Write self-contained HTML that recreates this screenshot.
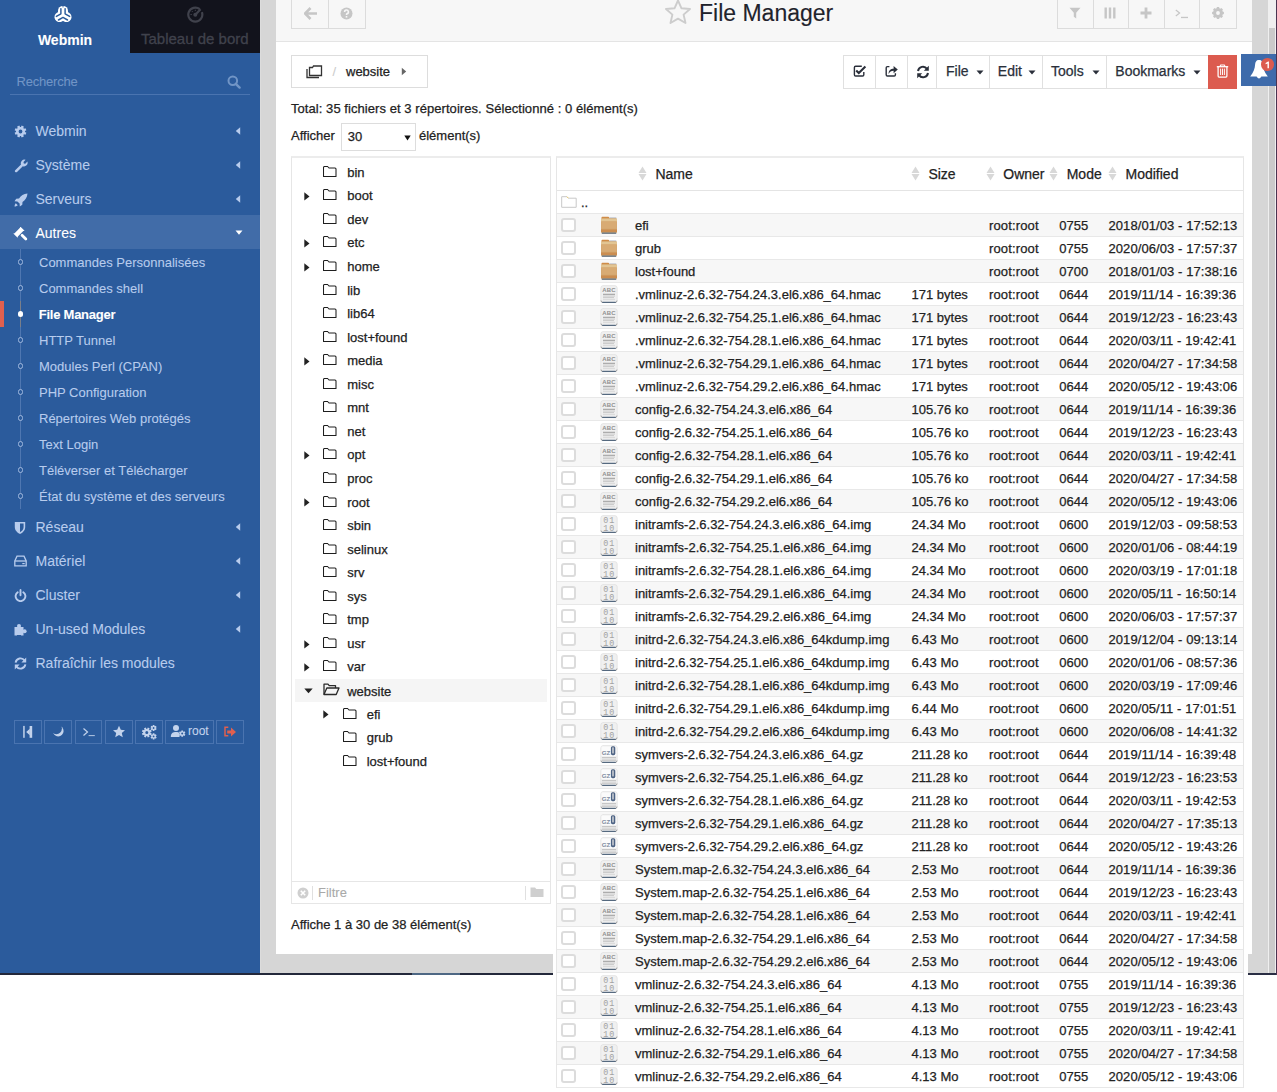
<!DOCTYPE html>
<html><head><meta charset="utf-8"><title>File Manager</title>
<style>
html,body{margin:0;padding:0;}
body{width:1277px;height:1092px;overflow:hidden;position:relative;background:#fff;font-family:"Liberation Sans", sans-serif;}
.r{position:absolute;}
.t{position:absolute;white-space:nowrap;}
</style></head><body>
<div class="r" style="left:0px;top:0px;width:1277px;height:973px;background:#d6d6d6"></div>
<div class="r" style="left:0px;top:0px;width:260px;height:973px;background:#2b5b9c"></div>
<div class="r" style="left:260px;top:0px;width:1px;height:973px;background:#dcdcdc"></div>
<div class="r" style="left:130px;top:0px;width:130px;height:53px;background:#12131c"></div>
<svg class="r" style="left:50.5px;top:3.3px" width="24" height="24" viewBox="-12 -12 24 24"><g fill="#fff"><rect x="-5.0" y="-9.1" width="10.0" height="14.1" rx="5.0"/><rect x="-5.0" y="-9.1" width="10.0" height="14.1" rx="5.0" transform="rotate(120)"/><rect x="-5.0" y="-9.1" width="10.0" height="14.1" rx="5.0" transform="rotate(240)"/></g>
<g fill="none" stroke="#2b5b9c" stroke-width="1.45" stroke-linecap="round" stroke-linejoin="round"><path d="M-2.1 -6.4 V-1.21 L-6.64 1.42"/><path d="M2.1 -6.4 V-1.21 L6.64 1.42"/><path d="M-4.54 5.0 L0 2.42 L4.54 5.0"/></g>
<path d="M0 -9.6 V-7.6" stroke="#2b5b9c" stroke-width="0.9"/></svg>
<div class="t" style="left:37.9px;top:31.55px;font-size:14px;line-height:16.8px;color:#ffffff;font-weight:700;-webkit-text-stroke:0.08px #ffffff;">Webmin</div>
<svg class="r" style="left:187px;top:6px" width="17" height="17" viewBox="0 0 17 17"><g fill="none" stroke="#40424c" stroke-width="2.2"><path d="M12.8 3.2 A7 7 0 1 0 14.9 6.2"/><path d="M8.3 8.8 L13.6 3.2"/></g><circle cx="8.3" cy="8.8" r="2" fill="#40424c"/><path d="M3.5 8.5 H4.8 M8.3 3.7 V5 M4.8 5 L5.7 5.9" stroke="#40424c" stroke-width="1"/></svg>
<div class="t" style="left:141px;top:30.00px;font-size:15px;line-height:18.0px;color:#40424c;font-weight:400;-webkit-text-stroke:0.08px #40424c;-webkit-text-stroke:0.3px #40424c">Tableau de bord</div>
<div class="t" style="left:16.5px;top:73.70px;font-size:13px;line-height:15.6px;color:#7195c6;font-weight:400;-webkit-text-stroke:0.08px #7195c6;letter-spacing:-0.2px">Recherche</div>
<svg class="r" style="left:227px;top:75px" width="14" height="14" viewBox="0 0 14 14"><circle cx="5.8" cy="5.8" r="4.3" fill="none" stroke="#7195c6" stroke-width="2"/><path d="M8.8 8.8 L12.6 12.6" stroke="#7195c6" stroke-width="2.4" stroke-linecap="round"/></svg>
<div class="r" style="left:10px;top:94px;width:240px;height:1px;background:#4a74b0"></div>
<svg class="r" style="left:14px;top:124.5px" width="13" height="13" viewBox="0 0 13 13"><path fill="#b8cced" fill-rule="evenodd" d="M10.98 6.92 L12.38 7.67 L11.49 9.83 L9.97 9.37 L9.37 9.97 L9.83 11.49 L7.67 12.38 L6.92 10.98 L6.08 10.98 L5.33 12.38 L3.17 11.49 L3.63 9.97 L3.03 9.37 L1.51 9.83 L0.62 7.67 L2.02 6.92 L2.02 6.08 L0.62 5.33 L1.51 3.17 L3.03 3.63 L3.63 3.03 L3.17 1.51 L5.33 0.62 L6.08 2.02 L6.92 2.02 L7.67 0.62 L9.83 1.51 L9.37 3.03 L9.97 3.63 L11.49 3.17 L12.38 5.33 L10.98 6.08z M8.40 6.50 A1.9 1.9 0 1 0 4.60 6.50 A1.9 1.9 0 1 0 8.40 6.50z"/></svg>
<div class="t" style="left:35.5px;top:122.75px;font-size:14px;line-height:16.8px;color:#b8cced;font-weight:400;-webkit-text-stroke:0.08px #b8cced;">Webmin</div>
<svg class="r" style="left:235px;top:127px" width="6" height="8" viewBox="0 0 6 8"><path d="M5.2 0.3v7.4L0.8 4z" fill="#b8cced"/></svg>
<svg class="r" style="left:14px;top:158.5px" width="14" height="14" viewBox="0 0 14 14"><path fill="#b8cced" d="M1.2 11.2 L7 5.4 a3.6 3.6 0 0 1 4.6-4.6 L9.5 2.9 l0.3 1.5 1.5 0.3 2.1-2.1 a3.6 3.6 0 0 1 -4.6 4.6 L3 12.9 a1.2 1.2 0 0 1-1.8-1.7z"/></svg>
<div class="t" style="left:35.5px;top:156.75px;font-size:14px;line-height:16.8px;color:#b8cced;font-weight:400;-webkit-text-stroke:0.08px #b8cced;">Système</div>
<svg class="r" style="left:235px;top:161px" width="6" height="8" viewBox="0 0 6 8"><path d="M5.2 0.3v7.4L0.8 4z" fill="#b8cced"/></svg>
<svg class="r" style="left:14px;top:192.5px" width="14" height="14" viewBox="0 0 14 14"><path fill="#b8cced" d="M13.5 0.5 C9.5 0.8 7 2.8 5 5.5 L2.2 5.7 0.5 8.2 3.4 8.4 5.6 10.6 5.8 13.5 8.3 11.8 8.5 9 C11.2 7 13.2 4.5 13.5 0.5z M1.8 10.2 C0.9 11 0.6 12.6 0.5 13.5 C1.4 13.4 3 13.1 3.8 12.2z"/></svg>
<div class="t" style="left:35.5px;top:190.75px;font-size:14px;line-height:16.8px;color:#b8cced;font-weight:400;-webkit-text-stroke:0.08px #b8cced;">Serveurs</div>
<svg class="r" style="left:235px;top:195px" width="6" height="8" viewBox="0 0 6 8"><path d="M5.2 0.3v7.4L0.8 4z" fill="#b8cced"/></svg>
<div class="r" style="left:0px;top:215px;width:260px;height:34px;background:#416ca8"></div>
<svg class="r" style="left:13px;top:226.5px" width="16" height="16" viewBox="0 0 16 16"><g fill="#ffffff" transform="translate(6.0 5.2) rotate(-45)"><path d="M-4.9 -3.2 L-3.8 -2.4 H3.8 L4.9 -3.2 V3.0 L3.8 2.2 H-3.8 L-4.9 3.0z"/><rect x="-1.4" y="3.0" width="2.8" height="8.0" rx="1.3"/></g></svg>
<div class="t" style="left:35.5px;top:224.75px;font-size:14px;line-height:16.8px;color:#ffffff;font-weight:400;-webkit-text-stroke:0.08px #ffffff;">Autres</div>
<svg class="r" style="left:235px;top:230px" width="8" height="5" viewBox="0 0 8 5"><path d="M0.5 0.5h7L4 4.8z" fill="#fff"/></svg>
<div class="r" style="left:20px;top:249px;width:1px;height:260px;background:#4f77b1"></div>
<div class="r" style="left:17.7px;top:259.4px;width:3.6px;height:3.6px;border-radius:50%;border:1px solid #9fb8de;background:#2b5b9c"></div>
<div class="t" style="left:39px;top:254.70px;font-size:13px;line-height:15.6px;color:#b8cced;font-weight:400;-webkit-text-stroke:0.08px #b8cced;">Commandes Personnalisées</div>
<div class="r" style="left:17.7px;top:285.4px;width:3.6px;height:3.6px;border-radius:50%;border:1px solid #9fb8de;background:#2b5b9c"></div>
<div class="t" style="left:39px;top:280.70px;font-size:13px;line-height:15.6px;color:#b8cced;font-weight:400;-webkit-text-stroke:0.08px #b8cced;">Commandes shell</div>
<div class="r" style="left:0px;top:301px;width:4px;height:26px;background:#e0604f"></div>
<div class="r" style="left:20px;top:301px;width:1px;height:26px;background:#7a7f8a"></div>
<div class="r" style="left:17.6px;top:311.2px;width:5.6px;height:5.6px;border-radius:50%;background:#fff"></div>
<div class="t" style="left:38.8px;top:306.70px;font-size:13px;line-height:15.6px;color:#ffffff;font-weight:700;-webkit-text-stroke:0.08px #ffffff;letter-spacing:-0.25px">File Manager</div>
<div class="r" style="left:17.7px;top:337.4px;width:3.6px;height:3.6px;border-radius:50%;border:1px solid #9fb8de;background:#2b5b9c"></div>
<div class="t" style="left:39px;top:332.70px;font-size:13px;line-height:15.6px;color:#b8cced;font-weight:400;-webkit-text-stroke:0.08px #b8cced;">HTTP Tunnel</div>
<div class="r" style="left:17.7px;top:363.4px;width:3.6px;height:3.6px;border-radius:50%;border:1px solid #9fb8de;background:#2b5b9c"></div>
<div class="t" style="left:39px;top:358.70px;font-size:13px;line-height:15.6px;color:#b8cced;font-weight:400;-webkit-text-stroke:0.08px #b8cced;">Modules Perl (CPAN)</div>
<div class="r" style="left:17.7px;top:389.4px;width:3.6px;height:3.6px;border-radius:50%;border:1px solid #9fb8de;background:#2b5b9c"></div>
<div class="t" style="left:39px;top:384.70px;font-size:13px;line-height:15.6px;color:#b8cced;font-weight:400;-webkit-text-stroke:0.08px #b8cced;">PHP Configuration</div>
<div class="r" style="left:17.7px;top:415.4px;width:3.6px;height:3.6px;border-radius:50%;border:1px solid #9fb8de;background:#2b5b9c"></div>
<div class="t" style="left:39px;top:410.70px;font-size:13px;line-height:15.6px;color:#b8cced;font-weight:400;-webkit-text-stroke:0.08px #b8cced;">Répertoires Web protégés</div>
<div class="r" style="left:17.7px;top:441.4px;width:3.6px;height:3.6px;border-radius:50%;border:1px solid #9fb8de;background:#2b5b9c"></div>
<div class="t" style="left:39px;top:436.70px;font-size:13px;line-height:15.6px;color:#b8cced;font-weight:400;-webkit-text-stroke:0.08px #b8cced;">Text Login</div>
<div class="r" style="left:17.7px;top:467.4px;width:3.6px;height:3.6px;border-radius:50%;border:1px solid #9fb8de;background:#2b5b9c"></div>
<div class="t" style="left:39px;top:462.70px;font-size:13px;line-height:15.6px;color:#b8cced;font-weight:400;-webkit-text-stroke:0.08px #b8cced;">Téléverser et Télécharger</div>
<div class="r" style="left:17.7px;top:493.4px;width:3.6px;height:3.6px;border-radius:50%;border:1px solid #9fb8de;background:#2b5b9c"></div>
<div class="t" style="left:39px;top:488.70px;font-size:13px;line-height:15.6px;color:#b8cced;font-weight:400;-webkit-text-stroke:0.08px #b8cced;">État du système et des serveurs</div>
<svg class="r" style="left:14px;top:520.5px" width="12" height="14" viewBox="0 0 12 14"><path fill="#b8cced" d="M0.8 1 H11.2 V6 C11.2 9.5 8.5 11.8 6 13 C3.5 11.8 0.8 9.5 0.8 6z"/><path fill="#2b5b9c" d="M6 2.6 H9.6 V6 C9.6 8.6 7.8 10.3 6 11.2z"/></svg>
<div class="t" style="left:35.5px;top:518.75px;font-size:14px;line-height:16.8px;color:#b8cced;font-weight:400;-webkit-text-stroke:0.08px #b8cced;">Réseau</div>
<svg class="r" style="left:235px;top:523px" width="6" height="8" viewBox="0 0 6 8"><path d="M5.2 0.3v7.4L0.8 4z" fill="#b8cced"/></svg>
<svg class="r" style="left:14px;top:554.5px" width="13" height="12" viewBox="0 0 13 12"><g fill="none" stroke="#b8cced" stroke-width="1.3"><path d="M0.8 6 L3 1.2 H10 L12.2 6 V10.8 H0.8z"/><path d="M0.8 6 H12.2"/></g><rect x="8.3" y="8" width="2.4" height="1.2" fill="#b8cced"/></svg>
<div class="t" style="left:35.5px;top:552.75px;font-size:14px;line-height:16.8px;color:#b8cced;font-weight:400;-webkit-text-stroke:0.08px #b8cced;">Matériel</div>
<svg class="r" style="left:235px;top:557px" width="6" height="8" viewBox="0 0 6 8"><path d="M5.2 0.3v7.4L0.8 4z" fill="#b8cced"/></svg>
<svg class="r" style="left:14px;top:588.5px" width="13" height="13" viewBox="0 0 13 13"><g fill="none" stroke="#b8cced" stroke-width="1.9" stroke-linecap="round"><path d="M3.7 3.2 A4.9 4.9 0 1 0 9.3 3.2"/><path d="M6.5 1 V6.3"/></g></svg>
<div class="t" style="left:35.5px;top:586.75px;font-size:14px;line-height:16.8px;color:#b8cced;font-weight:400;-webkit-text-stroke:0.08px #b8cced;">Cluster</div>
<svg class="r" style="left:235px;top:591px" width="6" height="8" viewBox="0 0 6 8"><path d="M5.2 0.3v7.4L0.8 4z" fill="#b8cced"/></svg>
<svg class="r" style="left:14px;top:622.5px" width="14" height="13" viewBox="0 0 14 13"><g fill="#b8cced"><rect x="0.5" y="4" width="9" height="8.5"/><circle cx="5" cy="3" r="2"/><circle cx="10.6" cy="8.2" r="2"/></g><rect x="3" y="12" width="4" height="1" fill="#2b5b9c"/></svg>
<div class="t" style="left:35.5px;top:620.75px;font-size:14px;line-height:16.8px;color:#b8cced;font-weight:400;-webkit-text-stroke:0.08px #b8cced;">Un-used Modules</div>
<svg class="r" style="left:235px;top:625px" width="6" height="8" viewBox="0 0 6 8"><path d="M5.2 0.3v7.4L0.8 4z" fill="#b8cced"/></svg>
<svg class="r" style="left:14px;top:656.5px" width="13" height="13" viewBox="0 0 13 13"><g fill="none" stroke="#b8cced" stroke-width="1.9"><path d="M1.6 5.6 A5 5 0 0 1 10.6 3.5"/><path d="M11.4 7.4 A5 5 0 0 1 2.4 9.5"/></g><path fill="#b8cced" d="M12.2 0.6 V5.4 H7.4z M0.8 12.4 V7.6 H5.6z"/></svg>
<div class="t" style="left:35.5px;top:654.75px;font-size:14px;line-height:16.8px;color:#b8cced;font-weight:400;-webkit-text-stroke:0.08px #b8cced;">Rafraîchir les modules</div>
<div class="r" style="left:14px;top:720px;width:25.5px;height:22px;border:1px solid #4a74b0"></div>
<div class="r" style="left:44.4px;top:720px;width:26px;height:22px;border:1px solid #4a74b0"></div>
<div class="r" style="left:75.2px;top:720px;width:25.3px;height:22px;border:1px solid #4a74b0"></div>
<div class="r" style="left:105.3px;top:720px;width:25.3px;height:22px;border:1px solid #4a74b0"></div>
<div class="r" style="left:135.4px;top:720px;width:25.2px;height:22px;border:1px solid #4a74b0"></div>
<div class="r" style="left:165.3px;top:720px;width:46.5px;height:22px;border:1px solid #4a74b0"></div>
<div class="r" style="left:216.4px;top:720px;width:25.2px;height:22px;border:1px solid #4a74b0"></div>
<svg class="r" style="left:20px;top:724px" width="16" height="16" viewBox="0 0 16 16"><rect x="3.2" y="1.9" width="1.5" height="11.9" fill="#c3d3ec"/><path d="M6.2 8 L9.8 4.7 V11.3z" fill="#c3d3ec"/><rect x="9.6" y="2" width="2.6" height="11.8" fill="#c3d3ec"/></svg>
<svg class="r" style="left:50px;top:723.2px" width="16" height="16" viewBox="0 0 16 16"><defs><mask id="moonm"><rect width="16" height="16" fill="#fff"/><circle cx="6.3" cy="5.6" r="5.6" fill="#000"/></mask></defs><circle cx="8.2" cy="8" r="5.4" fill="#c3d3ec" mask="url(#moonm)"/></svg>
<svg class="r" style="left:81px;top:724px" width="16" height="16" viewBox="0 0 16 16"><path d="M2.5 4.5 L6.5 8 L2.5 11.5" fill="none" stroke="#c3d3ec" stroke-width="1.2"/><rect x="7.6" y="11.2" width="6.2" height="0.9" fill="#c3d3ec"/></svg>
<svg class="r" style="left:111px;top:724px" width="16" height="16" viewBox="0 0 16 16"><path d="M8 1.8 L9.8 5.8 L14 6.2 L10.8 9 L11.8 13.3 L8 11 L4.2 13.3 L5.2 9 L2 6.2 L6.2 5.8z" fill="#c3d3ec"/></svg>
<svg class="r" style="left:141px;top:724px" width="17" height="16" viewBox="0 0 17 16"><path fill="#c3d3ec" fill-rule="evenodd" d="M9.38 8.84 L10.70 9.48 L9.96 11.28 L8.57 10.79 L8.09 11.27 L8.58 12.66 L6.78 13.40 L6.14 12.08 L5.46 12.08 L4.82 13.40 L3.02 12.66 L3.51 11.27 L3.03 10.79 L1.64 11.28 L0.90 9.48 L2.22 8.84 L2.22 8.16 L0.90 7.52 L1.64 5.72 L3.03 6.21 L3.51 5.73 L3.02 4.34 L4.82 3.60 L5.46 4.92 L6.14 4.92 L6.78 3.60 L8.58 4.34 L8.09 5.73 L8.57 6.21 L9.96 5.72 L10.70 7.52 L9.38 8.16z M7.30 8.50 A1.5 1.5 0 1 0 4.30 8.50 A1.5 1.5 0 1 0 7.30 8.50z M14.88 4.29 L15.69 4.83 L14.86 6.26 L13.99 5.83 L13.49 6.12 L13.43 7.09 L11.77 7.09 L11.71 6.12 L11.21 5.83 L10.34 6.26 L9.51 4.83 L10.32 4.29 L10.32 3.71 L9.51 3.17 L10.34 1.74 L11.21 2.17 L11.71 1.88 L11.77 0.91 L13.43 0.91 L13.49 1.88 L13.99 2.17 L14.86 1.74 L15.69 3.17 L14.88 3.71z M13.50 4.00 A0.9 0.9 0 1 0 11.70 4.00 A0.9 0.9 0 1 0 13.50 4.00z M14.88 12.69 L15.69 13.23 L14.86 14.66 L13.99 14.23 L13.49 14.52 L13.43 15.49 L11.77 15.49 L11.71 14.52 L11.21 14.23 L10.34 14.66 L9.51 13.23 L10.32 12.69 L10.32 12.11 L9.51 11.57 L10.34 10.14 L11.21 10.57 L11.71 10.28 L11.77 9.31 L13.43 9.31 L13.49 10.28 L13.99 10.57 L14.86 10.14 L15.69 11.57 L14.88 12.11z M13.50 12.40 A0.9 0.9 0 1 0 11.70 12.40 A0.9 0.9 0 1 0 13.50 12.40z"/></svg>
<svg class="r" style="left:170px;top:723.2px" width="18" height="16" viewBox="0 0 18 16"><circle cx="6" cy="5" r="3" fill="#c3d3ec"/><path d="M0.8 14 C0.8 10 3 9 6 9 C8 9 9 9.5 9.5 10 V14z" fill="#c3d3ec"/><path fill="#c3d3ec" fill-rule="evenodd" d="M14.58 10.90 L15.39 11.45 L14.53 12.93 L13.65 12.51 L13.13 12.81 L13.05 13.79 L11.35 13.79 L11.27 12.81 L10.75 12.51 L9.87 12.93 L9.01 11.45 L9.82 10.90 L9.82 10.30 L9.01 9.75 L9.87 8.27 L10.75 8.69 L11.27 8.39 L11.35 7.41 L13.05 7.41 L13.13 8.39 L13.65 8.69 L14.53 8.27 L15.39 9.75 L14.58 10.30z M13.20 10.60 A1.0 1.0 0 1 0 11.20 10.60 A1.0 1.0 0 1 0 13.20 10.60z"/></svg>
<div class="t" style="left:188px;top:724.14px;font-size:12px;line-height:14.4px;color:#c3d3ec;font-weight:400;-webkit-text-stroke:0.08px #c3d3ec;">root</div>
<svg class="r" style="left:222px;top:724px" width="16" height="16" viewBox="0 0 16 16"><path d="M6.3 3.2 H3 V11.8 H6.3" fill="none" stroke="#e0604f" stroke-width="1.5"/><path d="M5.2 6.4 H9 V3.6 L14 8 L9 12.4 V9.6 H5.2z" fill="#e0604f"/></svg>
<div class="r" style="left:276px;top:0px;width:976px;height:954px;background:#ffffff"></div>
<div class="r" style="left:276px;top:0px;width:976px;height:41px;background:#f7f7f7;border-bottom:1px solid #e4e4e4"></div>
<div class="r" style="left:291px;top:-10px;width:75px;height:39px;border:1px solid #dcdcdc;box-sizing:border-box"></div>
<div class="r" style="left:328px;top:0px;width:1px;height:28px;background:#dcdcdc"></div>
<svg class="r" style="left:304px;top:7px" width="14" height="13" viewBox="0 0 14 13"><path d="M6.5 1 L1 6.5 L6.5 12 M1.5 6.5 H13" fill="none" stroke="#c6c6c6" stroke-width="2.6" stroke-linejoin="miter"/></svg>
<svg class="r" style="left:340px;top:7px" width="13" height="13" viewBox="0 0 13 13"><circle cx="6.5" cy="6.5" r="6" fill="#c6c6c6"/><path d="M4.6 4.9 A1.9 1.9 0 1 1 6.9 6.7 C6.5 6.9 6.5 7.2 6.5 7.9" fill="none" stroke="#f7f7f7" stroke-width="1.6"/><rect x="5.7" y="9" width="1.6" height="1.6" fill="#f7f7f7"/></svg>
<svg class="r" style="left:664px;top:-1px" width="28" height="26" viewBox="0 0 28 26"><path d="M14 1.5 L17.5 9.3 L26 10 L19.6 15.6 L21.5 24 L14 19.6 L6.5 24 L8.4 15.6 L2 10 L10.5 9.3z" fill="none" stroke="#cdcdcd" stroke-width="1.9" stroke-linejoin="round"/></svg>
<div class="t" style="left:699px;top:-0.47px;font-size:23px;line-height:27.6px;color:#1f232c;font-weight:400;-webkit-text-stroke:0.12px #1f232c;">File Manager</div>
<div class="r" style="left:1057px;top:-10px;width:180px;height:39px;border:1px solid #dcdcdc;box-sizing:border-box"></div>
<div class="r" style="left:1093px;top:0px;width:1px;height:28px;background:#dcdcdc"></div>
<div class="r" style="left:1128px;top:0px;width:1px;height:28px;background:#dcdcdc"></div>
<div class="r" style="left:1164px;top:0px;width:1px;height:28px;background:#dcdcdc"></div>
<div class="r" style="left:1199px;top:0px;width:1px;height:28px;background:#dcdcdc"></div>
<svg class="r" style="left:1069px;top:7px" width="12" height="12" viewBox="0 0 12 12"><path d="M0.5 0.8 H11.5 L7.2 5.8 V11.5 L4.8 9.8 V5.8z" fill="#c6c6c6"/></svg>
<svg class="r" style="left:1104px;top:7px" width="12" height="12" viewBox="0 0 12 12"><rect x="0.5" y="0.5" width="2.4" height="11" fill="#c6c6c6"/><rect x="4.8" y="0.5" width="2.4" height="11" fill="#c6c6c6"/><rect x="9.1" y="0.5" width="2.4" height="11" fill="#c6c6c6"/></svg>
<svg class="r" style="left:1140px;top:7px" width="12" height="12" viewBox="0 0 12 12"><path d="M4.6 0.5 H7.4 V4.6 H11.5 V7.4 H7.4 V11.5 H4.6 V7.4 H0.5 V4.6 H4.6z" fill="#c6c6c6"/></svg>
<svg class="r" style="left:1175px;top:7px" width="14" height="12" viewBox="0 0 14 12"><path d="M0.8 3 L4.6 6 L0.8 9" fill="none" stroke="#c6c6c6" stroke-width="1.2"/><rect x="6" y="9.8" width="7" height="1.3" fill="#c6c6c6"/></svg>
<svg class="r" style="left:1211px;top:6px" width="14" height="14" viewBox="0 0 14 14"><path fill="#c6c6c6" fill-rule="evenodd" d="M5.56 2.32 L5.95 1.09 L8.05 1.09 L8.44 2.32 L9.29 2.67 L10.43 2.08 L11.92 3.57 L11.33 4.71 L11.68 5.56 L12.91 5.95 L12.91 8.05 L11.68 8.44 L11.33 9.29 L11.92 10.43 L10.43 11.92 L9.29 11.33 L8.44 11.68 L8.05 12.91 L5.95 12.91 L5.56 11.68 L4.71 11.33 L3.57 11.92 L2.08 10.43 L2.67 9.29 L2.32 8.44 L1.09 8.05 L1.09 5.95 L2.32 5.56 L2.67 4.71 L2.08 3.57 L3.57 2.08 L4.71 2.67z M8.90 7.00 A1.9 1.9 0 1 0 5.10 7.00 A1.9 1.9 0 1 0 8.90 7.00z"/></svg>
<div class="r" style="left:291px;top:55px;width:137px;height:33px;border:1px solid #dddddd;box-sizing:border-box"></div>
<svg class="r" style="left:306px;top:64px" width="17" height="15" viewBox="0 0 17 15"><g fill="none" stroke="#333" stroke-width="1.3"><path d="M3.5 3.5 H6.5 L7.5 2 H15.5 V11.5 H3.5z"/><path d="M1 5 V13.5 H13"/></g></svg>
<div class="t" style="left:332.5px;top:63.70px;font-size:13px;line-height:15.6px;color:#cccccc;font-weight:400;-webkit-text-stroke:0.08px #cccccc;">/</div>
<div class="t" style="left:346px;top:64.10px;font-size:13px;line-height:15.6px;color:#222;font-weight:400;-webkit-text-stroke:0.25px #222;">website</div>
<svg class="r" style="left:401px;top:67px" width="6" height="9" viewBox="0 0 6 9"><path d="M0.8 0.8 V8.2 L5.2 4.5z" fill="#666"/></svg>
<div class="r" style="left:843px;top:55px;width:366px;height:34px;border:1px solid #e0e0e0;box-sizing:border-box"></div>
<div class="r" style="left:875px;top:55px;width:1px;height:34px;background:#e0e0e0"></div>
<div class="r" style="left:907px;top:55px;width:1px;height:34px;background:#e0e0e0"></div>
<div class="r" style="left:936px;top:55px;width:1px;height:34px;background:#e0e0e0"></div>
<div class="r" style="left:989px;top:55px;width:1px;height:34px;background:#e0e0e0"></div>
<div class="r" style="left:1042px;top:55px;width:1px;height:34px;background:#e0e0e0"></div>
<div class="r" style="left:1106px;top:55px;width:1px;height:34px;background:#e0e0e0"></div>
<svg class="r" style="left:852px;top:64.3px" width="15" height="14" viewBox="0 0 15 14"><path d="M9.8 2.2 H3.6 Q2.4 2.2 2.4 3.4 V10.8 Q2.4 12 3.6 12 H10.6 Q11.8 12 11.8 10.8 V8" fill="none" stroke="#2a2f3a" stroke-width="1.4"/><path d="M4.2 6.4 L6.8 9 L13.4 2.6" fill="none" stroke="#2a2f3a" stroke-width="2.1"/></svg>
<svg class="r" style="left:884.3px;top:63.8px" width="15" height="14" viewBox="0 0 15 14"><path d="M5.4 2.6 H3.4 Q2.2 2.6 2.2 3.8 V10.8 Q2.2 12 3.4 12 H10.2 Q11.4 12 11.4 10.8 V9.2" fill="none" stroke="#2a2f3a" stroke-width="1.4"/><path d="M4.6 10 C4.6 6.2 6.6 4.8 9.6 4.8 V2 L13.8 5.6 L9.6 9.2 V6.8 C7.2 6.8 5.8 7.8 4.6 10z" fill="#2a2f3a"/></svg>
<svg class="r" style="left:916px;top:64.5px" width="14" height="14" viewBox="0 0 14 14"><g fill="none" stroke="#2a2f3a" stroke-width="2"><path d="M2 6 A5 5 0 0 1 11 3.8"/><path d="M12 8 A5 5 0 0 1 3 10.2"/></g><path fill="#2a2f3a" d="M12.8 0.8 V5.8 H7.8z M1.2 13.2 V8.2 H6.2z"/></svg>
<div class="t" style="left:946px;top:62.75px;font-size:14px;line-height:16.8px;color:#2a2f3a;font-weight:400;-webkit-text-stroke:0.25px #2a2f3a;">File</div>
<svg class="r" style="left:975.5px;top:70px" width="8" height="5" viewBox="0 0 8 5"><path d="M0.5 0.5 H7.5 L4 4.5z" fill="#2a2f3a"/></svg>
<div class="t" style="left:997.8px;top:62.75px;font-size:14px;line-height:16.8px;color:#2a2f3a;font-weight:400;-webkit-text-stroke:0.25px #2a2f3a;">Edit</div>
<svg class="r" style="left:1027.5px;top:70px" width="8" height="5" viewBox="0 0 8 5"><path d="M0.5 0.5 H7.5 L4 4.5z" fill="#2a2f3a"/></svg>
<div class="t" style="left:1051px;top:62.75px;font-size:14px;line-height:16.8px;color:#2a2f3a;font-weight:400;-webkit-text-stroke:0.25px #2a2f3a;">Tools</div>
<svg class="r" style="left:1091.5px;top:70px" width="8" height="5" viewBox="0 0 8 5"><path d="M0.5 0.5 H7.5 L4 4.5z" fill="#2a2f3a"/></svg>
<div class="t" style="left:1115.3px;top:62.75px;font-size:14px;line-height:16.8px;color:#2a2f3a;font-weight:400;-webkit-text-stroke:0.25px #2a2f3a;">Bookmarks</div>
<svg class="r" style="left:1192.8px;top:70px" width="8" height="5" viewBox="0 0 8 5"><path d="M0.5 0.5 H7.5 L4 4.5z" fill="#2a2f3a"/></svg>
<div class="r" style="left:1208px;top:55px;width:29px;height:34px;background:#dc5b4f"></div>
<svg class="r" style="left:1216px;top:64.2px" width="13" height="14" viewBox="0 0 13 14"><g fill="none" stroke="#fff"><path d="M0.8 2.7 H12.2" stroke-width="1.3"/><path d="M4.3 2.7 V1.7 Q4.3 1 5 1 H8 Q8.7 1 8.7 1.7 V2.7" stroke-width="1.1"/><path d="M2.1 2.7 V12.1 Q2.1 13 3 13 H10 Q10.9 13 10.9 12.1 V2.7" stroke-width="1.25"/><path d="M4.6 4.6 V11 M6.5 4.6 V11 M8.4 4.6 V11" stroke-width="0.95"/></g></svg>
<div class="t" style="left:291px;top:100.90px;font-size:13px;line-height:15.6px;color:#222;font-weight:400;-webkit-text-stroke:0.25px #222;letter-spacing:0.06px">Total: 35 fichiers et 3 répertoires. Sélectionné : 0 élément(s)</div>
<div class="t" style="left:291px;top:127.90px;font-size:13px;line-height:15.6px;color:#222;font-weight:400;-webkit-text-stroke:0.25px #222;">Afficher</div>
<div class="r" style="left:341px;top:123px;width:75px;height:28px;border:1px solid #dddddd;box-sizing:border-box;background:#fff"></div>
<div class="t" style="left:347.7px;top:128.70px;font-size:13px;line-height:15.6px;color:#222;font-weight:400;-webkit-text-stroke:0.25px #222;">30</div>
<svg class="r" style="left:404px;top:135px" width="7" height="6" viewBox="0 0 7 6"><path d="M0.3 0.5 H6.7 L3.5 5.5z" fill="#111"/></svg>
<div class="t" style="left:419px;top:127.90px;font-size:13px;line-height:15.6px;color:#222;font-weight:400;-webkit-text-stroke:0.25px #222;">élément(s)</div>
<div class="r" style="left:291px;top:156px;width:260px;height:748px;border:1px solid #e6e6e6;border-top:2px solid #ececec;box-sizing:border-box;background:#fff"></div>
<div class="r" style="left:292px;top:881px;width:258px;height:1px;background:#e6e6e6"></div>
<svg class="r" style="left:297px;top:887px" width="12" height="12" viewBox="0 0 12 12"><circle cx="6" cy="6" r="5.5" fill="#cfcfcf"/><path d="M3.8 3.8 L8.2 8.2 M8.2 3.8 L3.8 8.2" stroke="#fff" stroke-width="1.6"/></svg>
<div class="r" style="left:312px;top:886px;width:1px;height:14px;background:#e0e0e0"></div>
<div class="t" style="left:318px;top:885.20px;font-size:13px;line-height:15.6px;color:#a9a9a9;font-weight:400;-webkit-text-stroke:0.08px #a9a9a9;">Filtre</div>
<div class="r" style="left:525px;top:886px;width:1px;height:14px;background:#e0e0e0"></div>
<svg class="r" style="left:530px;top:886px" width="14" height="12" viewBox="0 0 14 12"><path d="M0.5 1.5 H5 L6.3 3 H13.5 V11 H0.5z" fill="#cfcfcf"/></svg>
<svg class="r" style="left:323px;top:166px" width="14" height="12" viewBox="0 0 14 12"><path d="M0.5 10.5 V1.5 Q0.5 0.5 1.5 0.5 H4.6 L6 2 H12 Q13 2 13 3 V10.5z" fill="none" stroke="#1e1e1e" stroke-width="1.05" stroke-linejoin="round"/></svg>
<div class="t" style="left:347.2px;top:164.70px;font-size:13px;line-height:15.6px;color:#222;font-weight:400;-webkit-text-stroke:0.25px #222;">bin</div>
<svg class="r" style="left:303.8px;top:192.0px" width="6" height="9" viewBox="0 0 6 9"><path d="M0.3 0.3 V8.5 L5.5 4.4z" fill="#222"/></svg>
<svg class="r" style="left:323px;top:189px" width="14" height="12" viewBox="0 0 14 12"><path d="M0.5 10.5 V1.5 Q0.5 0.5 1.5 0.5 H4.6 L6 2 H12 Q13 2 13 3 V10.5z" fill="none" stroke="#1e1e1e" stroke-width="1.05" stroke-linejoin="round"/></svg>
<div class="t" style="left:347.2px;top:188.26px;font-size:13px;line-height:15.6px;color:#222;font-weight:400;-webkit-text-stroke:0.25px #222;">boot</div>
<svg class="r" style="left:323px;top:213px" width="14" height="12" viewBox="0 0 14 12"><path d="M0.5 10.5 V1.5 Q0.5 0.5 1.5 0.5 H4.6 L6 2 H12 Q13 2 13 3 V10.5z" fill="none" stroke="#1e1e1e" stroke-width="1.05" stroke-linejoin="round"/></svg>
<div class="t" style="left:347.2px;top:211.82px;font-size:13px;line-height:15.6px;color:#222;font-weight:400;-webkit-text-stroke:0.25px #222;">dev</div>
<svg class="r" style="left:303.8px;top:239.1px" width="6" height="9" viewBox="0 0 6 9"><path d="M0.3 0.3 V8.5 L5.5 4.4z" fill="#222"/></svg>
<svg class="r" style="left:323px;top:236px" width="14" height="12" viewBox="0 0 14 12"><path d="M0.5 10.5 V1.5 Q0.5 0.5 1.5 0.5 H4.6 L6 2 H12 Q13 2 13 3 V10.5z" fill="none" stroke="#1e1e1e" stroke-width="1.05" stroke-linejoin="round"/></svg>
<div class="t" style="left:347.2px;top:235.38px;font-size:13px;line-height:15.6px;color:#222;font-weight:400;-webkit-text-stroke:0.25px #222;">etc</div>
<svg class="r" style="left:303.8px;top:262.6px" width="6" height="9" viewBox="0 0 6 9"><path d="M0.3 0.3 V8.5 L5.5 4.4z" fill="#222"/></svg>
<svg class="r" style="left:323px;top:260px" width="14" height="12" viewBox="0 0 14 12"><path d="M0.5 10.5 V1.5 Q0.5 0.5 1.5 0.5 H4.6 L6 2 H12 Q13 2 13 3 V10.5z" fill="none" stroke="#1e1e1e" stroke-width="1.05" stroke-linejoin="round"/></svg>
<div class="t" style="left:347.2px;top:258.94px;font-size:13px;line-height:15.6px;color:#222;font-weight:400;-webkit-text-stroke:0.25px #222;">home</div>
<svg class="r" style="left:323px;top:284px" width="14" height="12" viewBox="0 0 14 12"><path d="M0.5 10.5 V1.5 Q0.5 0.5 1.5 0.5 H4.6 L6 2 H12 Q13 2 13 3 V10.5z" fill="none" stroke="#1e1e1e" stroke-width="1.05" stroke-linejoin="round"/></svg>
<div class="t" style="left:347.2px;top:282.50px;font-size:13px;line-height:15.6px;color:#222;font-weight:400;-webkit-text-stroke:0.25px #222;">lib</div>
<svg class="r" style="left:323px;top:307px" width="14" height="12" viewBox="0 0 14 12"><path d="M0.5 10.5 V1.5 Q0.5 0.5 1.5 0.5 H4.6 L6 2 H12 Q13 2 13 3 V10.5z" fill="none" stroke="#1e1e1e" stroke-width="1.05" stroke-linejoin="round"/></svg>
<div class="t" style="left:347.2px;top:306.06px;font-size:13px;line-height:15.6px;color:#222;font-weight:400;-webkit-text-stroke:0.25px #222;">lib64</div>
<svg class="r" style="left:323px;top:331px" width="14" height="12" viewBox="0 0 14 12"><path d="M0.5 10.5 V1.5 Q0.5 0.5 1.5 0.5 H4.6 L6 2 H12 Q13 2 13 3 V10.5z" fill="none" stroke="#1e1e1e" stroke-width="1.05" stroke-linejoin="round"/></svg>
<div class="t" style="left:347.2px;top:329.62px;font-size:13px;line-height:15.6px;color:#222;font-weight:400;-webkit-text-stroke:0.25px #222;">lost+found</div>
<svg class="r" style="left:303.8px;top:356.9px" width="6" height="9" viewBox="0 0 6 9"><path d="M0.3 0.3 V8.5 L5.5 4.4z" fill="#222"/></svg>
<svg class="r" style="left:323px;top:354px" width="14" height="12" viewBox="0 0 14 12"><path d="M0.5 10.5 V1.5 Q0.5 0.5 1.5 0.5 H4.6 L6 2 H12 Q13 2 13 3 V10.5z" fill="none" stroke="#1e1e1e" stroke-width="1.05" stroke-linejoin="round"/></svg>
<div class="t" style="left:347.2px;top:353.18px;font-size:13px;line-height:15.6px;color:#222;font-weight:400;-webkit-text-stroke:0.25px #222;">media</div>
<svg class="r" style="left:323px;top:378px" width="14" height="12" viewBox="0 0 14 12"><path d="M0.5 10.5 V1.5 Q0.5 0.5 1.5 0.5 H4.6 L6 2 H12 Q13 2 13 3 V10.5z" fill="none" stroke="#1e1e1e" stroke-width="1.05" stroke-linejoin="round"/></svg>
<div class="t" style="left:347.2px;top:376.74px;font-size:13px;line-height:15.6px;color:#222;font-weight:400;-webkit-text-stroke:0.25px #222;">misc</div>
<svg class="r" style="left:323px;top:401px" width="14" height="12" viewBox="0 0 14 12"><path d="M0.5 10.5 V1.5 Q0.5 0.5 1.5 0.5 H4.6 L6 2 H12 Q13 2 13 3 V10.5z" fill="none" stroke="#1e1e1e" stroke-width="1.05" stroke-linejoin="round"/></svg>
<div class="t" style="left:347.2px;top:400.30px;font-size:13px;line-height:15.6px;color:#222;font-weight:400;-webkit-text-stroke:0.25px #222;">mnt</div>
<svg class="r" style="left:323px;top:425px" width="14" height="12" viewBox="0 0 14 12"><path d="M0.5 10.5 V1.5 Q0.5 0.5 1.5 0.5 H4.6 L6 2 H12 Q13 2 13 3 V10.5z" fill="none" stroke="#1e1e1e" stroke-width="1.05" stroke-linejoin="round"/></svg>
<div class="t" style="left:347.2px;top:423.86px;font-size:13px;line-height:15.6px;color:#222;font-weight:400;-webkit-text-stroke:0.25px #222;">net</div>
<svg class="r" style="left:303.8px;top:451.1px" width="6" height="9" viewBox="0 0 6 9"><path d="M0.3 0.3 V8.5 L5.5 4.4z" fill="#222"/></svg>
<svg class="r" style="left:323px;top:448px" width="14" height="12" viewBox="0 0 14 12"><path d="M0.5 10.5 V1.5 Q0.5 0.5 1.5 0.5 H4.6 L6 2 H12 Q13 2 13 3 V10.5z" fill="none" stroke="#1e1e1e" stroke-width="1.05" stroke-linejoin="round"/></svg>
<div class="t" style="left:347.2px;top:447.42px;font-size:13px;line-height:15.6px;color:#222;font-weight:400;-webkit-text-stroke:0.25px #222;">opt</div>
<svg class="r" style="left:323px;top:472px" width="14" height="12" viewBox="0 0 14 12"><path d="M0.5 10.5 V1.5 Q0.5 0.5 1.5 0.5 H4.6 L6 2 H12 Q13 2 13 3 V10.5z" fill="none" stroke="#1e1e1e" stroke-width="1.05" stroke-linejoin="round"/></svg>
<div class="t" style="left:347.2px;top:470.98px;font-size:13px;line-height:15.6px;color:#222;font-weight:400;-webkit-text-stroke:0.25px #222;">proc</div>
<svg class="r" style="left:303.8px;top:498.2px" width="6" height="9" viewBox="0 0 6 9"><path d="M0.3 0.3 V8.5 L5.5 4.4z" fill="#222"/></svg>
<svg class="r" style="left:323px;top:496px" width="14" height="12" viewBox="0 0 14 12"><path d="M0.5 10.5 V1.5 Q0.5 0.5 1.5 0.5 H4.6 L6 2 H12 Q13 2 13 3 V10.5z" fill="none" stroke="#1e1e1e" stroke-width="1.05" stroke-linejoin="round"/></svg>
<div class="t" style="left:347.2px;top:494.54px;font-size:13px;line-height:15.6px;color:#222;font-weight:400;-webkit-text-stroke:0.25px #222;">root</div>
<svg class="r" style="left:323px;top:519px" width="14" height="12" viewBox="0 0 14 12"><path d="M0.5 10.5 V1.5 Q0.5 0.5 1.5 0.5 H4.6 L6 2 H12 Q13 2 13 3 V10.5z" fill="none" stroke="#1e1e1e" stroke-width="1.05" stroke-linejoin="round"/></svg>
<div class="t" style="left:347.2px;top:518.10px;font-size:13px;line-height:15.6px;color:#222;font-weight:400;-webkit-text-stroke:0.25px #222;">sbin</div>
<svg class="r" style="left:323px;top:543px" width="14" height="12" viewBox="0 0 14 12"><path d="M0.5 10.5 V1.5 Q0.5 0.5 1.5 0.5 H4.6 L6 2 H12 Q13 2 13 3 V10.5z" fill="none" stroke="#1e1e1e" stroke-width="1.05" stroke-linejoin="round"/></svg>
<div class="t" style="left:347.2px;top:541.66px;font-size:13px;line-height:15.6px;color:#222;font-weight:400;-webkit-text-stroke:0.25px #222;">selinux</div>
<svg class="r" style="left:323px;top:566px" width="14" height="12" viewBox="0 0 14 12"><path d="M0.5 10.5 V1.5 Q0.5 0.5 1.5 0.5 H4.6 L6 2 H12 Q13 2 13 3 V10.5z" fill="none" stroke="#1e1e1e" stroke-width="1.05" stroke-linejoin="round"/></svg>
<div class="t" style="left:347.2px;top:565.22px;font-size:13px;line-height:15.6px;color:#222;font-weight:400;-webkit-text-stroke:0.25px #222;">srv</div>
<svg class="r" style="left:323px;top:590px" width="14" height="12" viewBox="0 0 14 12"><path d="M0.5 10.5 V1.5 Q0.5 0.5 1.5 0.5 H4.6 L6 2 H12 Q13 2 13 3 V10.5z" fill="none" stroke="#1e1e1e" stroke-width="1.05" stroke-linejoin="round"/></svg>
<div class="t" style="left:347.2px;top:588.78px;font-size:13px;line-height:15.6px;color:#222;font-weight:400;-webkit-text-stroke:0.25px #222;">sys</div>
<svg class="r" style="left:323px;top:613px" width="14" height="12" viewBox="0 0 14 12"><path d="M0.5 10.5 V1.5 Q0.5 0.5 1.5 0.5 H4.6 L6 2 H12 Q13 2 13 3 V10.5z" fill="none" stroke="#1e1e1e" stroke-width="1.05" stroke-linejoin="round"/></svg>
<div class="t" style="left:347.2px;top:612.34px;font-size:13px;line-height:15.6px;color:#222;font-weight:400;-webkit-text-stroke:0.25px #222;">tmp</div>
<svg class="r" style="left:303.8px;top:639.6px" width="6" height="9" viewBox="0 0 6 9"><path d="M0.3 0.3 V8.5 L5.5 4.4z" fill="#222"/></svg>
<svg class="r" style="left:323px;top:637px" width="14" height="12" viewBox="0 0 14 12"><path d="M0.5 10.5 V1.5 Q0.5 0.5 1.5 0.5 H4.6 L6 2 H12 Q13 2 13 3 V10.5z" fill="none" stroke="#1e1e1e" stroke-width="1.05" stroke-linejoin="round"/></svg>
<div class="t" style="left:347.2px;top:635.90px;font-size:13px;line-height:15.6px;color:#222;font-weight:400;-webkit-text-stroke:0.25px #222;">usr</div>
<svg class="r" style="left:303.8px;top:663.2px" width="6" height="9" viewBox="0 0 6 9"><path d="M0.3 0.3 V8.5 L5.5 4.4z" fill="#222"/></svg>
<svg class="r" style="left:323px;top:660px" width="14" height="12" viewBox="0 0 14 12"><path d="M0.5 10.5 V1.5 Q0.5 0.5 1.5 0.5 H4.6 L6 2 H12 Q13 2 13 3 V10.5z" fill="none" stroke="#1e1e1e" stroke-width="1.05" stroke-linejoin="round"/></svg>
<div class="t" style="left:347.2px;top:659.46px;font-size:13px;line-height:15.6px;color:#222;font-weight:400;-webkit-text-stroke:0.25px #222;">var</div>
<div class="r" style="left:295px;top:679.1px;width:252px;height:22.7px;background:#f5f5f5"></div>
<svg class="r" style="left:303.5px;top:688.3px" width="9" height="6" viewBox="0 0 9 6"><path d="M0.3 0.5 H8.7 L4.5 5.3z" fill="#222"/></svg>
<svg class="r" style="left:322.5px;top:683.1px" width="17" height="13" viewBox="0 0 17 13"><g fill="none" stroke="#2a2a2a" stroke-width="1.3" stroke-linejoin="round"><path d="M1 11.5 V1.2 H5 L6.2 2.6 H12.5 V5"/><path d="M1 11.5 L3.8 5 H16 L13.2 11.5z"/></g></svg>
<div class="t" style="left:347.2px;top:683.82px;font-size:13px;line-height:15.6px;color:#222;font-weight:400;-webkit-text-stroke:0.25px #222;">website</div>
<svg class="r" style="left:323.3px;top:710.3px" width="6" height="9" viewBox="0 0 6 9"><path d="M0.3 0.3 V8.5 L5.5 4.4z" fill="#222"/></svg>
<svg class="r" style="left:343px;top:708px" width="14" height="12" viewBox="0 0 14 12"><path d="M0.5 10.5 V1.5 Q0.5 0.5 1.5 0.5 H4.6 L6 2 H12 Q13 2 13 3 V10.5z" fill="none" stroke="#1e1e1e" stroke-width="1.05" stroke-linejoin="round"/></svg>
<div class="t" style="left:366.7px;top:706.58px;font-size:13px;line-height:15.6px;color:#222;font-weight:400;-webkit-text-stroke:0.25px #222;">efi</div>
<svg class="r" style="left:343px;top:731px" width="14" height="12" viewBox="0 0 14 12"><path d="M0.5 10.5 V1.5 Q0.5 0.5 1.5 0.5 H4.6 L6 2 H12 Q13 2 13 3 V10.5z" fill="none" stroke="#1e1e1e" stroke-width="1.05" stroke-linejoin="round"/></svg>
<div class="t" style="left:366.7px;top:730.14px;font-size:13px;line-height:15.6px;color:#222;font-weight:400;-webkit-text-stroke:0.25px #222;">grub</div>
<svg class="r" style="left:343px;top:755px" width="14" height="12" viewBox="0 0 14 12"><path d="M0.5 10.5 V1.5 Q0.5 0.5 1.5 0.5 H4.6 L6 2 H12 Q13 2 13 3 V10.5z" fill="none" stroke="#1e1e1e" stroke-width="1.05" stroke-linejoin="round"/></svg>
<div class="t" style="left:366.7px;top:753.70px;font-size:13px;line-height:15.6px;color:#222;font-weight:400;-webkit-text-stroke:0.25px #222;">lost+found</div>
<div class="t" style="left:291px;top:917.40px;font-size:13px;line-height:15.6px;color:#222;font-weight:400;-webkit-text-stroke:0.25px #222;">Affiche 1 à 30 de 38 élément(s)</div>
<div class="r" style="left:553px;top:954px;width:695px;height:138px;background:#fff"></div>
<div class="r" style="left:556px;top:156px;width:688px;height:932px;border:1px solid #e6e6e6;border-top:2px solid #ececec;box-sizing:border-box;background:#fff"></div>
<div class="r" style="left:557px;top:190px;width:686px;height:1px;background:#e4e4e4"></div>
<svg class="r" style="left:638px;top:166px" width="9" height="15" viewBox="0 0 9 15"><path d="M4.5 0.5 L8.5 7 H0.5z M0.5 8 H8.5 L4.5 14.5z" fill="#d8d8d8"/></svg>
<div class="t" style="left:655.4px;top:165.75px;font-size:14px;line-height:16.8px;color:#222;font-weight:400;-webkit-text-stroke:0.25px #222;">Name</div>
<svg class="r" style="left:911px;top:166px" width="9" height="15" viewBox="0 0 9 15"><path d="M4.5 0.5 L8.5 7 H0.5z M0.5 8 H8.5 L4.5 14.5z" fill="#d8d8d8"/></svg>
<div class="t" style="left:928.4px;top:165.75px;font-size:14px;line-height:16.8px;color:#222;font-weight:400;-webkit-text-stroke:0.25px #222;">Size</div>
<svg class="r" style="left:986px;top:166px" width="9" height="15" viewBox="0 0 9 15"><path d="M4.5 0.5 L8.5 7 H0.5z M0.5 8 H8.5 L4.5 14.5z" fill="#d8d8d8"/></svg>
<div class="t" style="left:1003.3px;top:165.75px;font-size:14px;line-height:16.8px;color:#222;font-weight:400;-webkit-text-stroke:0.25px #222;">Owner</div>
<svg class="r" style="left:1049px;top:166px" width="9" height="15" viewBox="0 0 9 15"><path d="M4.5 0.5 L8.5 7 H0.5z M0.5 8 H8.5 L4.5 14.5z" fill="#d8d8d8"/></svg>
<div class="t" style="left:1066.7px;top:165.75px;font-size:14px;line-height:16.8px;color:#222;font-weight:400;-webkit-text-stroke:0.25px #222;">Mode</div>
<svg class="r" style="left:1108px;top:166px" width="9" height="15" viewBox="0 0 9 15"><path d="M4.5 0.5 L8.5 7 H0.5z M0.5 8 H8.5 L4.5 14.5z" fill="#d8d8d8"/></svg>
<div class="t" style="left:1125.5px;top:165.75px;font-size:14px;line-height:16.8px;color:#222;font-weight:400;-webkit-text-stroke:0.25px #222;">Modified</div>
<svg class="r" style="left:561px;top:196px" width="16" height="12" viewBox="0 0 16 12"><path d="M0.7 11.3 V0.7 H6 L7.3 2.2 H15.2 V11.3z" fill="#fff" stroke="#c8c8c8" stroke-width="1"/><path d="M6 0.7 L7.3 2.2" stroke="#f0d070" stroke-width="1"/></svg>
<div class="t" style="left:581px;top:195.20px;font-size:13px;line-height:15.6px;color:#222;font-weight:400;-webkit-text-stroke:0.25px #222;">..</div>
<div class="r" style="left:557px;top:213px;width:686px;height:1px;background:#e8e8e8"></div>
<div class="r" style="left:557px;top:214px;width:686px;height:22px;background:#f7f7f7"></div>
<div class="r" style="left:557px;top:236px;width:686px;height:1px;background:#e8e8e8"></div>
<div class="r" style="left:561.3px;top:217.5px;width:14.4px;height:14.4px;box-sizing:border-box;border:2px solid #dcdcdc;border-radius:3px;background:#fff"></div>
<svg class="r" style="left:600px;top:216px" width="18" height="18" viewBox="0 0 18 18"><path d="M1.5 3 V1.6 Q1.5 0.8 2.3 0.8 H8.2 Q9 0.8 9.2 1.6 L9.4 2.2 H15.5 Q16.5 2.2 16.5 3z" fill="#cf8c48"/><rect x="9.5" y="1.5" width="6.8" height="1.2" fill="#a8aebb"/><rect x="1" y="2.6" width="16" height="14.8" rx="1.6" fill="#d5a972"/><rect x="1" y="2.6" width="16" height="2.8" fill="#e2c593"/><rect x="1.6" y="5.4" width="14.8" height="6.6" fill="#d8ab74"/><rect x="1" y="13.4" width="16" height="2.6" fill="#cb8d50"/><rect x="1.5" y="16" width="15" height="0.6" fill="#e5b77e"/><rect x="1.6" y="16.5" width="14.8" height="1.2" rx="0.6" fill="#55697f"/></svg>
<div class="t" style="left:635px;top:217.70px;font-size:13px;line-height:15.6px;color:#222;font-weight:400;-webkit-text-stroke:0.25px #222;">efi</div>
<div class="t" style="left:989px;top:217.70px;font-size:13px;line-height:15.6px;color:#222;font-weight:400;-webkit-text-stroke:0.25px #222;letter-spacing:0.15px">root:root</div>
<div class="t" style="left:1059.3px;top:217.70px;font-size:13px;line-height:15.6px;color:#222;font-weight:400;-webkit-text-stroke:0.25px #222;">0755</div>
<div class="t" style="left:1108.5px;top:217.70px;font-size:13px;line-height:15.6px;color:#222;font-weight:400;-webkit-text-stroke:0.25px #222;letter-spacing:0.08px">2018/01/03 - 17:52:13</div>
<div class="r" style="left:557px;top:259px;width:686px;height:1px;background:#e8e8e8"></div>
<div class="r" style="left:561.3px;top:240.5px;width:14.4px;height:14.4px;box-sizing:border-box;border:2px solid #dcdcdc;border-radius:3px;background:#fff"></div>
<svg class="r" style="left:600px;top:239px" width="18" height="18" viewBox="0 0 18 18"><path d="M1.5 3 V1.6 Q1.5 0.8 2.3 0.8 H8.2 Q9 0.8 9.2 1.6 L9.4 2.2 H15.5 Q16.5 2.2 16.5 3z" fill="#cf8c48"/><rect x="9.5" y="1.5" width="6.8" height="1.2" fill="#a8aebb"/><rect x="1" y="2.6" width="16" height="14.8" rx="1.6" fill="#d5a972"/><rect x="1" y="2.6" width="16" height="2.8" fill="#e2c593"/><rect x="1.6" y="5.4" width="14.8" height="6.6" fill="#d8ab74"/><rect x="1" y="13.4" width="16" height="2.6" fill="#cb8d50"/><rect x="1.5" y="16" width="15" height="0.6" fill="#e5b77e"/><rect x="1.6" y="16.5" width="14.8" height="1.2" rx="0.6" fill="#55697f"/></svg>
<div class="t" style="left:635px;top:240.70px;font-size:13px;line-height:15.6px;color:#222;font-weight:400;-webkit-text-stroke:0.25px #222;">grub</div>
<div class="t" style="left:989px;top:240.70px;font-size:13px;line-height:15.6px;color:#222;font-weight:400;-webkit-text-stroke:0.25px #222;letter-spacing:0.15px">root:root</div>
<div class="t" style="left:1059.3px;top:240.70px;font-size:13px;line-height:15.6px;color:#222;font-weight:400;-webkit-text-stroke:0.25px #222;">0755</div>
<div class="t" style="left:1108.5px;top:240.70px;font-size:13px;line-height:15.6px;color:#222;font-weight:400;-webkit-text-stroke:0.25px #222;letter-spacing:0.08px">2020/06/03 - 17:57:37</div>
<div class="r" style="left:557px;top:260px;width:686px;height:22px;background:#f7f7f7"></div>
<div class="r" style="left:557px;top:282px;width:686px;height:1px;background:#e8e8e8"></div>
<div class="r" style="left:561.3px;top:263.5px;width:14.4px;height:14.4px;box-sizing:border-box;border:2px solid #dcdcdc;border-radius:3px;background:#fff"></div>
<svg class="r" style="left:600px;top:262px" width="18" height="18" viewBox="0 0 18 18"><path d="M1.5 3 V1.6 Q1.5 0.8 2.3 0.8 H8.2 Q9 0.8 9.2 1.6 L9.4 2.2 H15.5 Q16.5 2.2 16.5 3z" fill="#cf8c48"/><rect x="9.5" y="1.5" width="6.8" height="1.2" fill="#a8aebb"/><rect x="1" y="2.6" width="16" height="14.8" rx="1.6" fill="#d5a972"/><rect x="1" y="2.6" width="16" height="2.8" fill="#e2c593"/><rect x="1.6" y="5.4" width="14.8" height="6.6" fill="#d8ab74"/><rect x="1" y="13.4" width="16" height="2.6" fill="#cb8d50"/><rect x="1.5" y="16" width="15" height="0.6" fill="#e5b77e"/><rect x="1.6" y="16.5" width="14.8" height="1.2" rx="0.6" fill="#55697f"/></svg>
<div class="t" style="left:635px;top:263.70px;font-size:13px;line-height:15.6px;color:#222;font-weight:400;-webkit-text-stroke:0.25px #222;">lost+found</div>
<div class="t" style="left:989px;top:263.70px;font-size:13px;line-height:15.6px;color:#222;font-weight:400;-webkit-text-stroke:0.25px #222;letter-spacing:0.15px">root:root</div>
<div class="t" style="left:1059.3px;top:263.70px;font-size:13px;line-height:15.6px;color:#222;font-weight:400;-webkit-text-stroke:0.25px #222;">0700</div>
<div class="t" style="left:1108.5px;top:263.70px;font-size:13px;line-height:15.6px;color:#222;font-weight:400;-webkit-text-stroke:0.25px #222;letter-spacing:0.08px">2018/01/03 - 17:38:16</div>
<div class="r" style="left:557px;top:305px;width:686px;height:1px;background:#e8e8e8"></div>
<div class="r" style="left:561.3px;top:286.5px;width:14.4px;height:14.4px;box-sizing:border-box;border:2px solid #dcdcdc;border-radius:3px;background:#fff"></div>
<svg class="r" style="left:600px;top:285px" width="18" height="18" viewBox="0 0 18 18"><rect x="0.9" y="0.7" width="16.2" height="16.8" rx="2.2" fill="#f3f3f3" stroke="#dedede" stroke-width="0.8"/><rect x="2" y="2" width="14" height="14" fill="#f0f0f0"/><path d="M1 15.5 Q1 17.6 3 17.6 H15 Q17 17.6 17 15.5" fill="none" stroke="#8a8a8a" stroke-width="0.7"/><rect x="2.2" y="16.7" width="13.6" height="1.2" rx="0.5" fill="#55697f"/><text x="9" y="7.3" font-family="Liberation Sans" font-size="6" font-weight="700" fill="#8f8f8f" text-anchor="middle" letter-spacing="0.2">ABC</text><rect x="3" y="8.8" width="12" height="0.9" fill="#8f8f8f"/><rect x="3" y="10.6" width="12" height="0.9" fill="#c4c4c4"/><rect x="3" y="12.2" width="11" height="0.9" fill="#c4c4c4"/><rect x="3" y="13.8" width="12" height="1.4" fill="#dcdcdc"/></svg>
<div class="t" style="left:635px;top:286.70px;font-size:13px;line-height:15.6px;color:#222;font-weight:400;-webkit-text-stroke:0.25px #222;">.vmlinuz-2.6.32-754.24.3.el6.x86_64.hmac</div>
<div class="t" style="left:911.5px;top:286.70px;font-size:13px;line-height:15.6px;color:#222;font-weight:400;-webkit-text-stroke:0.25px #222;">171 bytes</div>
<div class="t" style="left:989px;top:286.70px;font-size:13px;line-height:15.6px;color:#222;font-weight:400;-webkit-text-stroke:0.25px #222;letter-spacing:0.15px">root:root</div>
<div class="t" style="left:1059.3px;top:286.70px;font-size:13px;line-height:15.6px;color:#222;font-weight:400;-webkit-text-stroke:0.25px #222;">0644</div>
<div class="t" style="left:1108.5px;top:286.70px;font-size:13px;line-height:15.6px;color:#222;font-weight:400;-webkit-text-stroke:0.25px #222;letter-spacing:0.08px">2019/11/14 - 16:39:36</div>
<div class="r" style="left:557px;top:306px;width:686px;height:22px;background:#f7f7f7"></div>
<div class="r" style="left:557px;top:328px;width:686px;height:1px;background:#e8e8e8"></div>
<div class="r" style="left:561.3px;top:309.5px;width:14.4px;height:14.4px;box-sizing:border-box;border:2px solid #dcdcdc;border-radius:3px;background:#fff"></div>
<svg class="r" style="left:600px;top:308px" width="18" height="18" viewBox="0 0 18 18"><rect x="0.9" y="0.7" width="16.2" height="16.8" rx="2.2" fill="#f3f3f3" stroke="#dedede" stroke-width="0.8"/><rect x="2" y="2" width="14" height="14" fill="#f0f0f0"/><path d="M1 15.5 Q1 17.6 3 17.6 H15 Q17 17.6 17 15.5" fill="none" stroke="#8a8a8a" stroke-width="0.7"/><rect x="2.2" y="16.7" width="13.6" height="1.2" rx="0.5" fill="#55697f"/><text x="9" y="7.3" font-family="Liberation Sans" font-size="6" font-weight="700" fill="#8f8f8f" text-anchor="middle" letter-spacing="0.2">ABC</text><rect x="3" y="8.8" width="12" height="0.9" fill="#8f8f8f"/><rect x="3" y="10.6" width="12" height="0.9" fill="#c4c4c4"/><rect x="3" y="12.2" width="11" height="0.9" fill="#c4c4c4"/><rect x="3" y="13.8" width="12" height="1.4" fill="#dcdcdc"/></svg>
<div class="t" style="left:635px;top:309.70px;font-size:13px;line-height:15.6px;color:#222;font-weight:400;-webkit-text-stroke:0.25px #222;">.vmlinuz-2.6.32-754.25.1.el6.x86_64.hmac</div>
<div class="t" style="left:911.5px;top:309.70px;font-size:13px;line-height:15.6px;color:#222;font-weight:400;-webkit-text-stroke:0.25px #222;">171 bytes</div>
<div class="t" style="left:989px;top:309.70px;font-size:13px;line-height:15.6px;color:#222;font-weight:400;-webkit-text-stroke:0.25px #222;letter-spacing:0.15px">root:root</div>
<div class="t" style="left:1059.3px;top:309.70px;font-size:13px;line-height:15.6px;color:#222;font-weight:400;-webkit-text-stroke:0.25px #222;">0644</div>
<div class="t" style="left:1108.5px;top:309.70px;font-size:13px;line-height:15.6px;color:#222;font-weight:400;-webkit-text-stroke:0.25px #222;letter-spacing:0.08px">2019/12/23 - 16:23:43</div>
<div class="r" style="left:557px;top:351px;width:686px;height:1px;background:#e8e8e8"></div>
<div class="r" style="left:561.3px;top:332.5px;width:14.4px;height:14.4px;box-sizing:border-box;border:2px solid #dcdcdc;border-radius:3px;background:#fff"></div>
<svg class="r" style="left:600px;top:331px" width="18" height="18" viewBox="0 0 18 18"><rect x="0.9" y="0.7" width="16.2" height="16.8" rx="2.2" fill="#f3f3f3" stroke="#dedede" stroke-width="0.8"/><rect x="2" y="2" width="14" height="14" fill="#f0f0f0"/><path d="M1 15.5 Q1 17.6 3 17.6 H15 Q17 17.6 17 15.5" fill="none" stroke="#8a8a8a" stroke-width="0.7"/><rect x="2.2" y="16.7" width="13.6" height="1.2" rx="0.5" fill="#55697f"/><text x="9" y="7.3" font-family="Liberation Sans" font-size="6" font-weight="700" fill="#8f8f8f" text-anchor="middle" letter-spacing="0.2">ABC</text><rect x="3" y="8.8" width="12" height="0.9" fill="#8f8f8f"/><rect x="3" y="10.6" width="12" height="0.9" fill="#c4c4c4"/><rect x="3" y="12.2" width="11" height="0.9" fill="#c4c4c4"/><rect x="3" y="13.8" width="12" height="1.4" fill="#dcdcdc"/></svg>
<div class="t" style="left:635px;top:332.70px;font-size:13px;line-height:15.6px;color:#222;font-weight:400;-webkit-text-stroke:0.25px #222;">.vmlinuz-2.6.32-754.28.1.el6.x86_64.hmac</div>
<div class="t" style="left:911.5px;top:332.70px;font-size:13px;line-height:15.6px;color:#222;font-weight:400;-webkit-text-stroke:0.25px #222;">171 bytes</div>
<div class="t" style="left:989px;top:332.70px;font-size:13px;line-height:15.6px;color:#222;font-weight:400;-webkit-text-stroke:0.25px #222;letter-spacing:0.15px">root:root</div>
<div class="t" style="left:1059.3px;top:332.70px;font-size:13px;line-height:15.6px;color:#222;font-weight:400;-webkit-text-stroke:0.25px #222;">0644</div>
<div class="t" style="left:1108.5px;top:332.70px;font-size:13px;line-height:15.6px;color:#222;font-weight:400;-webkit-text-stroke:0.25px #222;letter-spacing:0.08px">2020/03/11 - 19:42:41</div>
<div class="r" style="left:557px;top:352px;width:686px;height:22px;background:#f7f7f7"></div>
<div class="r" style="left:557px;top:374px;width:686px;height:1px;background:#e8e8e8"></div>
<div class="r" style="left:561.3px;top:355.5px;width:14.4px;height:14.4px;box-sizing:border-box;border:2px solid #dcdcdc;border-radius:3px;background:#fff"></div>
<svg class="r" style="left:600px;top:354px" width="18" height="18" viewBox="0 0 18 18"><rect x="0.9" y="0.7" width="16.2" height="16.8" rx="2.2" fill="#f3f3f3" stroke="#dedede" stroke-width="0.8"/><rect x="2" y="2" width="14" height="14" fill="#f0f0f0"/><path d="M1 15.5 Q1 17.6 3 17.6 H15 Q17 17.6 17 15.5" fill="none" stroke="#8a8a8a" stroke-width="0.7"/><rect x="2.2" y="16.7" width="13.6" height="1.2" rx="0.5" fill="#55697f"/><text x="9" y="7.3" font-family="Liberation Sans" font-size="6" font-weight="700" fill="#8f8f8f" text-anchor="middle" letter-spacing="0.2">ABC</text><rect x="3" y="8.8" width="12" height="0.9" fill="#8f8f8f"/><rect x="3" y="10.6" width="12" height="0.9" fill="#c4c4c4"/><rect x="3" y="12.2" width="11" height="0.9" fill="#c4c4c4"/><rect x="3" y="13.8" width="12" height="1.4" fill="#dcdcdc"/></svg>
<div class="t" style="left:635px;top:355.70px;font-size:13px;line-height:15.6px;color:#222;font-weight:400;-webkit-text-stroke:0.25px #222;">.vmlinuz-2.6.32-754.29.1.el6.x86_64.hmac</div>
<div class="t" style="left:911.5px;top:355.70px;font-size:13px;line-height:15.6px;color:#222;font-weight:400;-webkit-text-stroke:0.25px #222;">171 bytes</div>
<div class="t" style="left:989px;top:355.70px;font-size:13px;line-height:15.6px;color:#222;font-weight:400;-webkit-text-stroke:0.25px #222;letter-spacing:0.15px">root:root</div>
<div class="t" style="left:1059.3px;top:355.70px;font-size:13px;line-height:15.6px;color:#222;font-weight:400;-webkit-text-stroke:0.25px #222;">0644</div>
<div class="t" style="left:1108.5px;top:355.70px;font-size:13px;line-height:15.6px;color:#222;font-weight:400;-webkit-text-stroke:0.25px #222;letter-spacing:0.08px">2020/04/27 - 17:34:58</div>
<div class="r" style="left:557px;top:397px;width:686px;height:1px;background:#e8e8e8"></div>
<div class="r" style="left:561.3px;top:378.5px;width:14.4px;height:14.4px;box-sizing:border-box;border:2px solid #dcdcdc;border-radius:3px;background:#fff"></div>
<svg class="r" style="left:600px;top:377px" width="18" height="18" viewBox="0 0 18 18"><rect x="0.9" y="0.7" width="16.2" height="16.8" rx="2.2" fill="#f3f3f3" stroke="#dedede" stroke-width="0.8"/><rect x="2" y="2" width="14" height="14" fill="#f0f0f0"/><path d="M1 15.5 Q1 17.6 3 17.6 H15 Q17 17.6 17 15.5" fill="none" stroke="#8a8a8a" stroke-width="0.7"/><rect x="2.2" y="16.7" width="13.6" height="1.2" rx="0.5" fill="#55697f"/><text x="9" y="7.3" font-family="Liberation Sans" font-size="6" font-weight="700" fill="#8f8f8f" text-anchor="middle" letter-spacing="0.2">ABC</text><rect x="3" y="8.8" width="12" height="0.9" fill="#8f8f8f"/><rect x="3" y="10.6" width="12" height="0.9" fill="#c4c4c4"/><rect x="3" y="12.2" width="11" height="0.9" fill="#c4c4c4"/><rect x="3" y="13.8" width="12" height="1.4" fill="#dcdcdc"/></svg>
<div class="t" style="left:635px;top:378.70px;font-size:13px;line-height:15.6px;color:#222;font-weight:400;-webkit-text-stroke:0.25px #222;">.vmlinuz-2.6.32-754.29.2.el6.x86_64.hmac</div>
<div class="t" style="left:911.5px;top:378.70px;font-size:13px;line-height:15.6px;color:#222;font-weight:400;-webkit-text-stroke:0.25px #222;">171 bytes</div>
<div class="t" style="left:989px;top:378.70px;font-size:13px;line-height:15.6px;color:#222;font-weight:400;-webkit-text-stroke:0.25px #222;letter-spacing:0.15px">root:root</div>
<div class="t" style="left:1059.3px;top:378.70px;font-size:13px;line-height:15.6px;color:#222;font-weight:400;-webkit-text-stroke:0.25px #222;">0644</div>
<div class="t" style="left:1108.5px;top:378.70px;font-size:13px;line-height:15.6px;color:#222;font-weight:400;-webkit-text-stroke:0.25px #222;letter-spacing:0.08px">2020/05/12 - 19:43:06</div>
<div class="r" style="left:557px;top:398px;width:686px;height:22px;background:#f7f7f7"></div>
<div class="r" style="left:557px;top:420px;width:686px;height:1px;background:#e8e8e8"></div>
<div class="r" style="left:561.3px;top:401.5px;width:14.4px;height:14.4px;box-sizing:border-box;border:2px solid #dcdcdc;border-radius:3px;background:#fff"></div>
<svg class="r" style="left:600px;top:400px" width="18" height="18" viewBox="0 0 18 18"><rect x="0.9" y="0.7" width="16.2" height="16.8" rx="2.2" fill="#f3f3f3" stroke="#dedede" stroke-width="0.8"/><rect x="2" y="2" width="14" height="14" fill="#f0f0f0"/><path d="M1 15.5 Q1 17.6 3 17.6 H15 Q17 17.6 17 15.5" fill="none" stroke="#8a8a8a" stroke-width="0.7"/><rect x="2.2" y="16.7" width="13.6" height="1.2" rx="0.5" fill="#55697f"/><text x="9" y="7.3" font-family="Liberation Sans" font-size="6" font-weight="700" fill="#8f8f8f" text-anchor="middle" letter-spacing="0.2">ABC</text><rect x="3" y="8.8" width="12" height="0.9" fill="#8f8f8f"/><rect x="3" y="10.6" width="12" height="0.9" fill="#c4c4c4"/><rect x="3" y="12.2" width="11" height="0.9" fill="#c4c4c4"/><rect x="3" y="13.8" width="12" height="1.4" fill="#dcdcdc"/></svg>
<div class="t" style="left:635px;top:401.70px;font-size:13px;line-height:15.6px;color:#222;font-weight:400;-webkit-text-stroke:0.25px #222;">config-2.6.32-754.24.3.el6.x86_64</div>
<div class="t" style="left:911.5px;top:401.70px;font-size:13px;line-height:15.6px;color:#222;font-weight:400;-webkit-text-stroke:0.25px #222;">105.76 ko</div>
<div class="t" style="left:989px;top:401.70px;font-size:13px;line-height:15.6px;color:#222;font-weight:400;-webkit-text-stroke:0.25px #222;letter-spacing:0.15px">root:root</div>
<div class="t" style="left:1059.3px;top:401.70px;font-size:13px;line-height:15.6px;color:#222;font-weight:400;-webkit-text-stroke:0.25px #222;">0644</div>
<div class="t" style="left:1108.5px;top:401.70px;font-size:13px;line-height:15.6px;color:#222;font-weight:400;-webkit-text-stroke:0.25px #222;letter-spacing:0.08px">2019/11/14 - 16:39:36</div>
<div class="r" style="left:557px;top:443px;width:686px;height:1px;background:#e8e8e8"></div>
<div class="r" style="left:561.3px;top:424.5px;width:14.4px;height:14.4px;box-sizing:border-box;border:2px solid #dcdcdc;border-radius:3px;background:#fff"></div>
<svg class="r" style="left:600px;top:423px" width="18" height="18" viewBox="0 0 18 18"><rect x="0.9" y="0.7" width="16.2" height="16.8" rx="2.2" fill="#f3f3f3" stroke="#dedede" stroke-width="0.8"/><rect x="2" y="2" width="14" height="14" fill="#f0f0f0"/><path d="M1 15.5 Q1 17.6 3 17.6 H15 Q17 17.6 17 15.5" fill="none" stroke="#8a8a8a" stroke-width="0.7"/><rect x="2.2" y="16.7" width="13.6" height="1.2" rx="0.5" fill="#55697f"/><text x="9" y="7.3" font-family="Liberation Sans" font-size="6" font-weight="700" fill="#8f8f8f" text-anchor="middle" letter-spacing="0.2">ABC</text><rect x="3" y="8.8" width="12" height="0.9" fill="#8f8f8f"/><rect x="3" y="10.6" width="12" height="0.9" fill="#c4c4c4"/><rect x="3" y="12.2" width="11" height="0.9" fill="#c4c4c4"/><rect x="3" y="13.8" width="12" height="1.4" fill="#dcdcdc"/></svg>
<div class="t" style="left:635px;top:424.70px;font-size:13px;line-height:15.6px;color:#222;font-weight:400;-webkit-text-stroke:0.25px #222;">config-2.6.32-754.25.1.el6.x86_64</div>
<div class="t" style="left:911.5px;top:424.70px;font-size:13px;line-height:15.6px;color:#222;font-weight:400;-webkit-text-stroke:0.25px #222;">105.76 ko</div>
<div class="t" style="left:989px;top:424.70px;font-size:13px;line-height:15.6px;color:#222;font-weight:400;-webkit-text-stroke:0.25px #222;letter-spacing:0.15px">root:root</div>
<div class="t" style="left:1059.3px;top:424.70px;font-size:13px;line-height:15.6px;color:#222;font-weight:400;-webkit-text-stroke:0.25px #222;">0644</div>
<div class="t" style="left:1108.5px;top:424.70px;font-size:13px;line-height:15.6px;color:#222;font-weight:400;-webkit-text-stroke:0.25px #222;letter-spacing:0.08px">2019/12/23 - 16:23:43</div>
<div class="r" style="left:557px;top:444px;width:686px;height:22px;background:#f7f7f7"></div>
<div class="r" style="left:557px;top:466px;width:686px;height:1px;background:#e8e8e8"></div>
<div class="r" style="left:561.3px;top:447.5px;width:14.4px;height:14.4px;box-sizing:border-box;border:2px solid #dcdcdc;border-radius:3px;background:#fff"></div>
<svg class="r" style="left:600px;top:446px" width="18" height="18" viewBox="0 0 18 18"><rect x="0.9" y="0.7" width="16.2" height="16.8" rx="2.2" fill="#f3f3f3" stroke="#dedede" stroke-width="0.8"/><rect x="2" y="2" width="14" height="14" fill="#f0f0f0"/><path d="M1 15.5 Q1 17.6 3 17.6 H15 Q17 17.6 17 15.5" fill="none" stroke="#8a8a8a" stroke-width="0.7"/><rect x="2.2" y="16.7" width="13.6" height="1.2" rx="0.5" fill="#55697f"/><text x="9" y="7.3" font-family="Liberation Sans" font-size="6" font-weight="700" fill="#8f8f8f" text-anchor="middle" letter-spacing="0.2">ABC</text><rect x="3" y="8.8" width="12" height="0.9" fill="#8f8f8f"/><rect x="3" y="10.6" width="12" height="0.9" fill="#c4c4c4"/><rect x="3" y="12.2" width="11" height="0.9" fill="#c4c4c4"/><rect x="3" y="13.8" width="12" height="1.4" fill="#dcdcdc"/></svg>
<div class="t" style="left:635px;top:447.70px;font-size:13px;line-height:15.6px;color:#222;font-weight:400;-webkit-text-stroke:0.25px #222;">config-2.6.32-754.28.1.el6.x86_64</div>
<div class="t" style="left:911.5px;top:447.70px;font-size:13px;line-height:15.6px;color:#222;font-weight:400;-webkit-text-stroke:0.25px #222;">105.76 ko</div>
<div class="t" style="left:989px;top:447.70px;font-size:13px;line-height:15.6px;color:#222;font-weight:400;-webkit-text-stroke:0.25px #222;letter-spacing:0.15px">root:root</div>
<div class="t" style="left:1059.3px;top:447.70px;font-size:13px;line-height:15.6px;color:#222;font-weight:400;-webkit-text-stroke:0.25px #222;">0644</div>
<div class="t" style="left:1108.5px;top:447.70px;font-size:13px;line-height:15.6px;color:#222;font-weight:400;-webkit-text-stroke:0.25px #222;letter-spacing:0.08px">2020/03/11 - 19:42:41</div>
<div class="r" style="left:557px;top:489px;width:686px;height:1px;background:#e8e8e8"></div>
<div class="r" style="left:561.3px;top:470.5px;width:14.4px;height:14.4px;box-sizing:border-box;border:2px solid #dcdcdc;border-radius:3px;background:#fff"></div>
<svg class="r" style="left:600px;top:469px" width="18" height="18" viewBox="0 0 18 18"><rect x="0.9" y="0.7" width="16.2" height="16.8" rx="2.2" fill="#f3f3f3" stroke="#dedede" stroke-width="0.8"/><rect x="2" y="2" width="14" height="14" fill="#f0f0f0"/><path d="M1 15.5 Q1 17.6 3 17.6 H15 Q17 17.6 17 15.5" fill="none" stroke="#8a8a8a" stroke-width="0.7"/><rect x="2.2" y="16.7" width="13.6" height="1.2" rx="0.5" fill="#55697f"/><text x="9" y="7.3" font-family="Liberation Sans" font-size="6" font-weight="700" fill="#8f8f8f" text-anchor="middle" letter-spacing="0.2">ABC</text><rect x="3" y="8.8" width="12" height="0.9" fill="#8f8f8f"/><rect x="3" y="10.6" width="12" height="0.9" fill="#c4c4c4"/><rect x="3" y="12.2" width="11" height="0.9" fill="#c4c4c4"/><rect x="3" y="13.8" width="12" height="1.4" fill="#dcdcdc"/></svg>
<div class="t" style="left:635px;top:470.70px;font-size:13px;line-height:15.6px;color:#222;font-weight:400;-webkit-text-stroke:0.25px #222;">config-2.6.32-754.29.1.el6.x86_64</div>
<div class="t" style="left:911.5px;top:470.70px;font-size:13px;line-height:15.6px;color:#222;font-weight:400;-webkit-text-stroke:0.25px #222;">105.76 ko</div>
<div class="t" style="left:989px;top:470.70px;font-size:13px;line-height:15.6px;color:#222;font-weight:400;-webkit-text-stroke:0.25px #222;letter-spacing:0.15px">root:root</div>
<div class="t" style="left:1059.3px;top:470.70px;font-size:13px;line-height:15.6px;color:#222;font-weight:400;-webkit-text-stroke:0.25px #222;">0644</div>
<div class="t" style="left:1108.5px;top:470.70px;font-size:13px;line-height:15.6px;color:#222;font-weight:400;-webkit-text-stroke:0.25px #222;letter-spacing:0.08px">2020/04/27 - 17:34:58</div>
<div class="r" style="left:557px;top:490px;width:686px;height:22px;background:#f7f7f7"></div>
<div class="r" style="left:557px;top:512px;width:686px;height:1px;background:#e8e8e8"></div>
<div class="r" style="left:561.3px;top:493.5px;width:14.4px;height:14.4px;box-sizing:border-box;border:2px solid #dcdcdc;border-radius:3px;background:#fff"></div>
<svg class="r" style="left:600px;top:492px" width="18" height="18" viewBox="0 0 18 18"><rect x="0.9" y="0.7" width="16.2" height="16.8" rx="2.2" fill="#f3f3f3" stroke="#dedede" stroke-width="0.8"/><rect x="2" y="2" width="14" height="14" fill="#f0f0f0"/><path d="M1 15.5 Q1 17.6 3 17.6 H15 Q17 17.6 17 15.5" fill="none" stroke="#8a8a8a" stroke-width="0.7"/><rect x="2.2" y="16.7" width="13.6" height="1.2" rx="0.5" fill="#55697f"/><text x="9" y="7.3" font-family="Liberation Sans" font-size="6" font-weight="700" fill="#8f8f8f" text-anchor="middle" letter-spacing="0.2">ABC</text><rect x="3" y="8.8" width="12" height="0.9" fill="#8f8f8f"/><rect x="3" y="10.6" width="12" height="0.9" fill="#c4c4c4"/><rect x="3" y="12.2" width="11" height="0.9" fill="#c4c4c4"/><rect x="3" y="13.8" width="12" height="1.4" fill="#dcdcdc"/></svg>
<div class="t" style="left:635px;top:493.70px;font-size:13px;line-height:15.6px;color:#222;font-weight:400;-webkit-text-stroke:0.25px #222;">config-2.6.32-754.29.2.el6.x86_64</div>
<div class="t" style="left:911.5px;top:493.70px;font-size:13px;line-height:15.6px;color:#222;font-weight:400;-webkit-text-stroke:0.25px #222;">105.76 ko</div>
<div class="t" style="left:989px;top:493.70px;font-size:13px;line-height:15.6px;color:#222;font-weight:400;-webkit-text-stroke:0.25px #222;letter-spacing:0.15px">root:root</div>
<div class="t" style="left:1059.3px;top:493.70px;font-size:13px;line-height:15.6px;color:#222;font-weight:400;-webkit-text-stroke:0.25px #222;">0644</div>
<div class="t" style="left:1108.5px;top:493.70px;font-size:13px;line-height:15.6px;color:#222;font-weight:400;-webkit-text-stroke:0.25px #222;letter-spacing:0.08px">2020/05/12 - 19:43:06</div>
<div class="r" style="left:557px;top:535px;width:686px;height:1px;background:#e8e8e8"></div>
<div class="r" style="left:561.3px;top:516.5px;width:14.4px;height:14.4px;box-sizing:border-box;border:2px solid #dcdcdc;border-radius:3px;background:#fff"></div>
<svg class="r" style="left:600px;top:515px" width="18" height="18" viewBox="0 0 18 18"><rect x="0.9" y="0.7" width="16.2" height="16.8" rx="2.2" fill="#f3f3f3" stroke="#dedede" stroke-width="0.8"/><rect x="2" y="2" width="14" height="14" fill="#f0f0f0"/><path d="M1 15.5 Q1 17.6 3 17.6 H15 Q17 17.6 17 15.5" fill="none" stroke="#8a8a8a" stroke-width="0.7"/><rect x="2.2" y="16.7" width="13.6" height="1.2" rx="0.5" fill="#55697f"/><text x="3.3" y="7.9" font-family="Liberation Mono" font-size="8.4" fill="#a2a2a2" letter-spacing="0.9">01</text><text x="3.3" y="15.6" font-family="Liberation Mono" font-size="8.4" fill="#a2a2a2" letter-spacing="0.9">10</text></svg>
<div class="t" style="left:635px;top:516.70px;font-size:13px;line-height:15.6px;color:#222;font-weight:400;-webkit-text-stroke:0.25px #222;">initramfs-2.6.32-754.24.3.el6.x86_64.img</div>
<div class="t" style="left:911.5px;top:516.70px;font-size:13px;line-height:15.6px;color:#222;font-weight:400;-webkit-text-stroke:0.25px #222;">24.34 Mo</div>
<div class="t" style="left:989px;top:516.70px;font-size:13px;line-height:15.6px;color:#222;font-weight:400;-webkit-text-stroke:0.25px #222;letter-spacing:0.15px">root:root</div>
<div class="t" style="left:1059.3px;top:516.70px;font-size:13px;line-height:15.6px;color:#222;font-weight:400;-webkit-text-stroke:0.25px #222;">0600</div>
<div class="t" style="left:1108.5px;top:516.70px;font-size:13px;line-height:15.6px;color:#222;font-weight:400;-webkit-text-stroke:0.25px #222;letter-spacing:0.08px">2019/12/03 - 09:58:53</div>
<div class="r" style="left:557px;top:536px;width:686px;height:22px;background:#f7f7f7"></div>
<div class="r" style="left:557px;top:558px;width:686px;height:1px;background:#e8e8e8"></div>
<div class="r" style="left:561.3px;top:539.5px;width:14.4px;height:14.4px;box-sizing:border-box;border:2px solid #dcdcdc;border-radius:3px;background:#fff"></div>
<svg class="r" style="left:600px;top:538px" width="18" height="18" viewBox="0 0 18 18"><rect x="0.9" y="0.7" width="16.2" height="16.8" rx="2.2" fill="#f3f3f3" stroke="#dedede" stroke-width="0.8"/><rect x="2" y="2" width="14" height="14" fill="#f0f0f0"/><path d="M1 15.5 Q1 17.6 3 17.6 H15 Q17 17.6 17 15.5" fill="none" stroke="#8a8a8a" stroke-width="0.7"/><rect x="2.2" y="16.7" width="13.6" height="1.2" rx="0.5" fill="#55697f"/><text x="3.3" y="7.9" font-family="Liberation Mono" font-size="8.4" fill="#a2a2a2" letter-spacing="0.9">01</text><text x="3.3" y="15.6" font-family="Liberation Mono" font-size="8.4" fill="#a2a2a2" letter-spacing="0.9">10</text></svg>
<div class="t" style="left:635px;top:539.70px;font-size:13px;line-height:15.6px;color:#222;font-weight:400;-webkit-text-stroke:0.25px #222;">initramfs-2.6.32-754.25.1.el6.x86_64.img</div>
<div class="t" style="left:911.5px;top:539.70px;font-size:13px;line-height:15.6px;color:#222;font-weight:400;-webkit-text-stroke:0.25px #222;">24.34 Mo</div>
<div class="t" style="left:989px;top:539.70px;font-size:13px;line-height:15.6px;color:#222;font-weight:400;-webkit-text-stroke:0.25px #222;letter-spacing:0.15px">root:root</div>
<div class="t" style="left:1059.3px;top:539.70px;font-size:13px;line-height:15.6px;color:#222;font-weight:400;-webkit-text-stroke:0.25px #222;">0600</div>
<div class="t" style="left:1108.5px;top:539.70px;font-size:13px;line-height:15.6px;color:#222;font-weight:400;-webkit-text-stroke:0.25px #222;letter-spacing:0.08px">2020/01/06 - 08:44:19</div>
<div class="r" style="left:557px;top:581px;width:686px;height:1px;background:#e8e8e8"></div>
<div class="r" style="left:561.3px;top:562.5px;width:14.4px;height:14.4px;box-sizing:border-box;border:2px solid #dcdcdc;border-radius:3px;background:#fff"></div>
<svg class="r" style="left:600px;top:561px" width="18" height="18" viewBox="0 0 18 18"><rect x="0.9" y="0.7" width="16.2" height="16.8" rx="2.2" fill="#f3f3f3" stroke="#dedede" stroke-width="0.8"/><rect x="2" y="2" width="14" height="14" fill="#f0f0f0"/><path d="M1 15.5 Q1 17.6 3 17.6 H15 Q17 17.6 17 15.5" fill="none" stroke="#8a8a8a" stroke-width="0.7"/><rect x="2.2" y="16.7" width="13.6" height="1.2" rx="0.5" fill="#55697f"/><text x="3.3" y="7.9" font-family="Liberation Mono" font-size="8.4" fill="#a2a2a2" letter-spacing="0.9">01</text><text x="3.3" y="15.6" font-family="Liberation Mono" font-size="8.4" fill="#a2a2a2" letter-spacing="0.9">10</text></svg>
<div class="t" style="left:635px;top:562.70px;font-size:13px;line-height:15.6px;color:#222;font-weight:400;-webkit-text-stroke:0.25px #222;">initramfs-2.6.32-754.28.1.el6.x86_64.img</div>
<div class="t" style="left:911.5px;top:562.70px;font-size:13px;line-height:15.6px;color:#222;font-weight:400;-webkit-text-stroke:0.25px #222;">24.34 Mo</div>
<div class="t" style="left:989px;top:562.70px;font-size:13px;line-height:15.6px;color:#222;font-weight:400;-webkit-text-stroke:0.25px #222;letter-spacing:0.15px">root:root</div>
<div class="t" style="left:1059.3px;top:562.70px;font-size:13px;line-height:15.6px;color:#222;font-weight:400;-webkit-text-stroke:0.25px #222;">0600</div>
<div class="t" style="left:1108.5px;top:562.70px;font-size:13px;line-height:15.6px;color:#222;font-weight:400;-webkit-text-stroke:0.25px #222;letter-spacing:0.08px">2020/03/19 - 17:01:18</div>
<div class="r" style="left:557px;top:582px;width:686px;height:22px;background:#f7f7f7"></div>
<div class="r" style="left:557px;top:604px;width:686px;height:1px;background:#e8e8e8"></div>
<div class="r" style="left:561.3px;top:585.5px;width:14.4px;height:14.4px;box-sizing:border-box;border:2px solid #dcdcdc;border-radius:3px;background:#fff"></div>
<svg class="r" style="left:600px;top:584px" width="18" height="18" viewBox="0 0 18 18"><rect x="0.9" y="0.7" width="16.2" height="16.8" rx="2.2" fill="#f3f3f3" stroke="#dedede" stroke-width="0.8"/><rect x="2" y="2" width="14" height="14" fill="#f0f0f0"/><path d="M1 15.5 Q1 17.6 3 17.6 H15 Q17 17.6 17 15.5" fill="none" stroke="#8a8a8a" stroke-width="0.7"/><rect x="2.2" y="16.7" width="13.6" height="1.2" rx="0.5" fill="#55697f"/><text x="3.3" y="7.9" font-family="Liberation Mono" font-size="8.4" fill="#a2a2a2" letter-spacing="0.9">01</text><text x="3.3" y="15.6" font-family="Liberation Mono" font-size="8.4" fill="#a2a2a2" letter-spacing="0.9">10</text></svg>
<div class="t" style="left:635px;top:585.70px;font-size:13px;line-height:15.6px;color:#222;font-weight:400;-webkit-text-stroke:0.25px #222;">initramfs-2.6.32-754.29.1.el6.x86_64.img</div>
<div class="t" style="left:911.5px;top:585.70px;font-size:13px;line-height:15.6px;color:#222;font-weight:400;-webkit-text-stroke:0.25px #222;">24.34 Mo</div>
<div class="t" style="left:989px;top:585.70px;font-size:13px;line-height:15.6px;color:#222;font-weight:400;-webkit-text-stroke:0.25px #222;letter-spacing:0.15px">root:root</div>
<div class="t" style="left:1059.3px;top:585.70px;font-size:13px;line-height:15.6px;color:#222;font-weight:400;-webkit-text-stroke:0.25px #222;">0600</div>
<div class="t" style="left:1108.5px;top:585.70px;font-size:13px;line-height:15.6px;color:#222;font-weight:400;-webkit-text-stroke:0.25px #222;letter-spacing:0.08px">2020/05/11 - 16:50:14</div>
<div class="r" style="left:557px;top:627px;width:686px;height:1px;background:#e8e8e8"></div>
<div class="r" style="left:561.3px;top:608.5px;width:14.4px;height:14.4px;box-sizing:border-box;border:2px solid #dcdcdc;border-radius:3px;background:#fff"></div>
<svg class="r" style="left:600px;top:607px" width="18" height="18" viewBox="0 0 18 18"><rect x="0.9" y="0.7" width="16.2" height="16.8" rx="2.2" fill="#f3f3f3" stroke="#dedede" stroke-width="0.8"/><rect x="2" y="2" width="14" height="14" fill="#f0f0f0"/><path d="M1 15.5 Q1 17.6 3 17.6 H15 Q17 17.6 17 15.5" fill="none" stroke="#8a8a8a" stroke-width="0.7"/><rect x="2.2" y="16.7" width="13.6" height="1.2" rx="0.5" fill="#55697f"/><text x="3.3" y="7.9" font-family="Liberation Mono" font-size="8.4" fill="#a2a2a2" letter-spacing="0.9">01</text><text x="3.3" y="15.6" font-family="Liberation Mono" font-size="8.4" fill="#a2a2a2" letter-spacing="0.9">10</text></svg>
<div class="t" style="left:635px;top:608.70px;font-size:13px;line-height:15.6px;color:#222;font-weight:400;-webkit-text-stroke:0.25px #222;">initramfs-2.6.32-754.29.2.el6.x86_64.img</div>
<div class="t" style="left:911.5px;top:608.70px;font-size:13px;line-height:15.6px;color:#222;font-weight:400;-webkit-text-stroke:0.25px #222;">24.34 Mo</div>
<div class="t" style="left:989px;top:608.70px;font-size:13px;line-height:15.6px;color:#222;font-weight:400;-webkit-text-stroke:0.25px #222;letter-spacing:0.15px">root:root</div>
<div class="t" style="left:1059.3px;top:608.70px;font-size:13px;line-height:15.6px;color:#222;font-weight:400;-webkit-text-stroke:0.25px #222;">0600</div>
<div class="t" style="left:1108.5px;top:608.70px;font-size:13px;line-height:15.6px;color:#222;font-weight:400;-webkit-text-stroke:0.25px #222;letter-spacing:0.08px">2020/06/03 - 17:57:37</div>
<div class="r" style="left:557px;top:628px;width:686px;height:22px;background:#f7f7f7"></div>
<div class="r" style="left:557px;top:650px;width:686px;height:1px;background:#e8e8e8"></div>
<div class="r" style="left:561.3px;top:631.5px;width:14.4px;height:14.4px;box-sizing:border-box;border:2px solid #dcdcdc;border-radius:3px;background:#fff"></div>
<svg class="r" style="left:600px;top:630px" width="18" height="18" viewBox="0 0 18 18"><rect x="0.9" y="0.7" width="16.2" height="16.8" rx="2.2" fill="#f3f3f3" stroke="#dedede" stroke-width="0.8"/><rect x="2" y="2" width="14" height="14" fill="#f0f0f0"/><path d="M1 15.5 Q1 17.6 3 17.6 H15 Q17 17.6 17 15.5" fill="none" stroke="#8a8a8a" stroke-width="0.7"/><rect x="2.2" y="16.7" width="13.6" height="1.2" rx="0.5" fill="#55697f"/><text x="3.3" y="7.9" font-family="Liberation Mono" font-size="8.4" fill="#a2a2a2" letter-spacing="0.9">01</text><text x="3.3" y="15.6" font-family="Liberation Mono" font-size="8.4" fill="#a2a2a2" letter-spacing="0.9">10</text></svg>
<div class="t" style="left:635px;top:631.70px;font-size:13px;line-height:15.6px;color:#222;font-weight:400;-webkit-text-stroke:0.25px #222;">initrd-2.6.32-754.24.3.el6.x86_64kdump.img</div>
<div class="t" style="left:911.5px;top:631.70px;font-size:13px;line-height:15.6px;color:#222;font-weight:400;-webkit-text-stroke:0.25px #222;">6.43 Mo</div>
<div class="t" style="left:989px;top:631.70px;font-size:13px;line-height:15.6px;color:#222;font-weight:400;-webkit-text-stroke:0.25px #222;letter-spacing:0.15px">root:root</div>
<div class="t" style="left:1059.3px;top:631.70px;font-size:13px;line-height:15.6px;color:#222;font-weight:400;-webkit-text-stroke:0.25px #222;">0600</div>
<div class="t" style="left:1108.5px;top:631.70px;font-size:13px;line-height:15.6px;color:#222;font-weight:400;-webkit-text-stroke:0.25px #222;letter-spacing:0.08px">2019/12/04 - 09:13:14</div>
<div class="r" style="left:557px;top:673px;width:686px;height:1px;background:#e8e8e8"></div>
<div class="r" style="left:561.3px;top:654.5px;width:14.4px;height:14.4px;box-sizing:border-box;border:2px solid #dcdcdc;border-radius:3px;background:#fff"></div>
<svg class="r" style="left:600px;top:653px" width="18" height="18" viewBox="0 0 18 18"><rect x="0.9" y="0.7" width="16.2" height="16.8" rx="2.2" fill="#f3f3f3" stroke="#dedede" stroke-width="0.8"/><rect x="2" y="2" width="14" height="14" fill="#f0f0f0"/><path d="M1 15.5 Q1 17.6 3 17.6 H15 Q17 17.6 17 15.5" fill="none" stroke="#8a8a8a" stroke-width="0.7"/><rect x="2.2" y="16.7" width="13.6" height="1.2" rx="0.5" fill="#55697f"/><text x="3.3" y="7.9" font-family="Liberation Mono" font-size="8.4" fill="#a2a2a2" letter-spacing="0.9">01</text><text x="3.3" y="15.6" font-family="Liberation Mono" font-size="8.4" fill="#a2a2a2" letter-spacing="0.9">10</text></svg>
<div class="t" style="left:635px;top:654.70px;font-size:13px;line-height:15.6px;color:#222;font-weight:400;-webkit-text-stroke:0.25px #222;">initrd-2.6.32-754.25.1.el6.x86_64kdump.img</div>
<div class="t" style="left:911.5px;top:654.70px;font-size:13px;line-height:15.6px;color:#222;font-weight:400;-webkit-text-stroke:0.25px #222;">6.43 Mo</div>
<div class="t" style="left:989px;top:654.70px;font-size:13px;line-height:15.6px;color:#222;font-weight:400;-webkit-text-stroke:0.25px #222;letter-spacing:0.15px">root:root</div>
<div class="t" style="left:1059.3px;top:654.70px;font-size:13px;line-height:15.6px;color:#222;font-weight:400;-webkit-text-stroke:0.25px #222;">0600</div>
<div class="t" style="left:1108.5px;top:654.70px;font-size:13px;line-height:15.6px;color:#222;font-weight:400;-webkit-text-stroke:0.25px #222;letter-spacing:0.08px">2020/01/06 - 08:57:36</div>
<div class="r" style="left:557px;top:674px;width:686px;height:22px;background:#f7f7f7"></div>
<div class="r" style="left:557px;top:696px;width:686px;height:1px;background:#e8e8e8"></div>
<div class="r" style="left:561.3px;top:677.5px;width:14.4px;height:14.4px;box-sizing:border-box;border:2px solid #dcdcdc;border-radius:3px;background:#fff"></div>
<svg class="r" style="left:600px;top:676px" width="18" height="18" viewBox="0 0 18 18"><rect x="0.9" y="0.7" width="16.2" height="16.8" rx="2.2" fill="#f3f3f3" stroke="#dedede" stroke-width="0.8"/><rect x="2" y="2" width="14" height="14" fill="#f0f0f0"/><path d="M1 15.5 Q1 17.6 3 17.6 H15 Q17 17.6 17 15.5" fill="none" stroke="#8a8a8a" stroke-width="0.7"/><rect x="2.2" y="16.7" width="13.6" height="1.2" rx="0.5" fill="#55697f"/><text x="3.3" y="7.9" font-family="Liberation Mono" font-size="8.4" fill="#a2a2a2" letter-spacing="0.9">01</text><text x="3.3" y="15.6" font-family="Liberation Mono" font-size="8.4" fill="#a2a2a2" letter-spacing="0.9">10</text></svg>
<div class="t" style="left:635px;top:677.70px;font-size:13px;line-height:15.6px;color:#222;font-weight:400;-webkit-text-stroke:0.25px #222;">initrd-2.6.32-754.28.1.el6.x86_64kdump.img</div>
<div class="t" style="left:911.5px;top:677.70px;font-size:13px;line-height:15.6px;color:#222;font-weight:400;-webkit-text-stroke:0.25px #222;">6.43 Mo</div>
<div class="t" style="left:989px;top:677.70px;font-size:13px;line-height:15.6px;color:#222;font-weight:400;-webkit-text-stroke:0.25px #222;letter-spacing:0.15px">root:root</div>
<div class="t" style="left:1059.3px;top:677.70px;font-size:13px;line-height:15.6px;color:#222;font-weight:400;-webkit-text-stroke:0.25px #222;">0600</div>
<div class="t" style="left:1108.5px;top:677.70px;font-size:13px;line-height:15.6px;color:#222;font-weight:400;-webkit-text-stroke:0.25px #222;letter-spacing:0.08px">2020/03/19 - 17:09:46</div>
<div class="r" style="left:557px;top:719px;width:686px;height:1px;background:#e8e8e8"></div>
<div class="r" style="left:561.3px;top:700.5px;width:14.4px;height:14.4px;box-sizing:border-box;border:2px solid #dcdcdc;border-radius:3px;background:#fff"></div>
<svg class="r" style="left:600px;top:699px" width="18" height="18" viewBox="0 0 18 18"><rect x="0.9" y="0.7" width="16.2" height="16.8" rx="2.2" fill="#f3f3f3" stroke="#dedede" stroke-width="0.8"/><rect x="2" y="2" width="14" height="14" fill="#f0f0f0"/><path d="M1 15.5 Q1 17.6 3 17.6 H15 Q17 17.6 17 15.5" fill="none" stroke="#8a8a8a" stroke-width="0.7"/><rect x="2.2" y="16.7" width="13.6" height="1.2" rx="0.5" fill="#55697f"/><text x="3.3" y="7.9" font-family="Liberation Mono" font-size="8.4" fill="#a2a2a2" letter-spacing="0.9">01</text><text x="3.3" y="15.6" font-family="Liberation Mono" font-size="8.4" fill="#a2a2a2" letter-spacing="0.9">10</text></svg>
<div class="t" style="left:635px;top:700.70px;font-size:13px;line-height:15.6px;color:#222;font-weight:400;-webkit-text-stroke:0.25px #222;">initrd-2.6.32-754.29.1.el6.x86_64kdump.img</div>
<div class="t" style="left:911.5px;top:700.70px;font-size:13px;line-height:15.6px;color:#222;font-weight:400;-webkit-text-stroke:0.25px #222;">6.44 Mo</div>
<div class="t" style="left:989px;top:700.70px;font-size:13px;line-height:15.6px;color:#222;font-weight:400;-webkit-text-stroke:0.25px #222;letter-spacing:0.15px">root:root</div>
<div class="t" style="left:1059.3px;top:700.70px;font-size:13px;line-height:15.6px;color:#222;font-weight:400;-webkit-text-stroke:0.25px #222;">0600</div>
<div class="t" style="left:1108.5px;top:700.70px;font-size:13px;line-height:15.6px;color:#222;font-weight:400;-webkit-text-stroke:0.25px #222;letter-spacing:0.08px">2020/05/11 - 17:01:51</div>
<div class="r" style="left:557px;top:720px;width:686px;height:22px;background:#f7f7f7"></div>
<div class="r" style="left:557px;top:742px;width:686px;height:1px;background:#e8e8e8"></div>
<div class="r" style="left:561.3px;top:723.5px;width:14.4px;height:14.4px;box-sizing:border-box;border:2px solid #dcdcdc;border-radius:3px;background:#fff"></div>
<svg class="r" style="left:600px;top:722px" width="18" height="18" viewBox="0 0 18 18"><rect x="0.9" y="0.7" width="16.2" height="16.8" rx="2.2" fill="#f3f3f3" stroke="#dedede" stroke-width="0.8"/><rect x="2" y="2" width="14" height="14" fill="#f0f0f0"/><path d="M1 15.5 Q1 17.6 3 17.6 H15 Q17 17.6 17 15.5" fill="none" stroke="#8a8a8a" stroke-width="0.7"/><rect x="2.2" y="16.7" width="13.6" height="1.2" rx="0.5" fill="#55697f"/><text x="3.3" y="7.9" font-family="Liberation Mono" font-size="8.4" fill="#a2a2a2" letter-spacing="0.9">01</text><text x="3.3" y="15.6" font-family="Liberation Mono" font-size="8.4" fill="#a2a2a2" letter-spacing="0.9">10</text></svg>
<div class="t" style="left:635px;top:723.70px;font-size:13px;line-height:15.6px;color:#222;font-weight:400;-webkit-text-stroke:0.25px #222;">initrd-2.6.32-754.29.2.el6.x86_64kdump.img</div>
<div class="t" style="left:911.5px;top:723.70px;font-size:13px;line-height:15.6px;color:#222;font-weight:400;-webkit-text-stroke:0.25px #222;">6.43 Mo</div>
<div class="t" style="left:989px;top:723.70px;font-size:13px;line-height:15.6px;color:#222;font-weight:400;-webkit-text-stroke:0.25px #222;letter-spacing:0.15px">root:root</div>
<div class="t" style="left:1059.3px;top:723.70px;font-size:13px;line-height:15.6px;color:#222;font-weight:400;-webkit-text-stroke:0.25px #222;">0600</div>
<div class="t" style="left:1108.5px;top:723.70px;font-size:13px;line-height:15.6px;color:#222;font-weight:400;-webkit-text-stroke:0.25px #222;letter-spacing:0.08px">2020/06/08 - 14:41:32</div>
<div class="r" style="left:557px;top:765px;width:686px;height:1px;background:#e8e8e8"></div>
<div class="r" style="left:561.3px;top:746.5px;width:14.4px;height:14.4px;box-sizing:border-box;border:2px solid #dcdcdc;border-radius:3px;background:#fff"></div>
<svg class="r" style="left:600px;top:745px" width="18" height="18" viewBox="0 0 18 18"><rect x="0.9" y="0.7" width="16.2" height="16.8" rx="2.2" fill="#f3f3f3" stroke="#dedede" stroke-width="0.8"/><rect x="2" y="2" width="14" height="14" fill="#f0f0f0"/><path d="M1 15.5 Q1 17.6 3 17.6 H15 Q17 17.6 17 15.5" fill="none" stroke="#8a8a8a" stroke-width="0.7"/><rect x="2.2" y="16.7" width="13.6" height="1.2" rx="0.5" fill="#55697f"/><rect x="1.5" y="1.5" width="15" height="9.5" fill="#fbfbfb"/><text x="1.8" y="10" font-family="Liberation Sans" font-size="6.2" font-weight="700" fill="#7f8ca0">GZ</text><rect x="10.9" y="1.2" width="4.4" height="9" rx="1.6" fill="#4d6384"/><rect x="12.2" y="2.4" width="1.6" height="6" fill="#c9ccd2"/><rect x="2" y="12" width="14" height="1.3" fill="#c6c6c6"/><rect x="2" y="14.5" width="14" height="1.3" fill="#c6c6c6"/></svg>
<div class="t" style="left:635px;top:746.70px;font-size:13px;line-height:15.6px;color:#222;font-weight:400;-webkit-text-stroke:0.25px #222;">symvers-2.6.32-754.24.3.el6.x86_64.gz</div>
<div class="t" style="left:911.5px;top:746.70px;font-size:13px;line-height:15.6px;color:#222;font-weight:400;-webkit-text-stroke:0.25px #222;">211.28 ko</div>
<div class="t" style="left:989px;top:746.70px;font-size:13px;line-height:15.6px;color:#222;font-weight:400;-webkit-text-stroke:0.25px #222;letter-spacing:0.15px">root:root</div>
<div class="t" style="left:1059.3px;top:746.70px;font-size:13px;line-height:15.6px;color:#222;font-weight:400;-webkit-text-stroke:0.25px #222;">0644</div>
<div class="t" style="left:1108.5px;top:746.70px;font-size:13px;line-height:15.6px;color:#222;font-weight:400;-webkit-text-stroke:0.25px #222;letter-spacing:0.08px">2019/11/14 - 16:39:48</div>
<div class="r" style="left:557px;top:766px;width:686px;height:22px;background:#f7f7f7"></div>
<div class="r" style="left:557px;top:788px;width:686px;height:1px;background:#e8e8e8"></div>
<div class="r" style="left:561.3px;top:769.5px;width:14.4px;height:14.4px;box-sizing:border-box;border:2px solid #dcdcdc;border-radius:3px;background:#fff"></div>
<svg class="r" style="left:600px;top:768px" width="18" height="18" viewBox="0 0 18 18"><rect x="0.9" y="0.7" width="16.2" height="16.8" rx="2.2" fill="#f3f3f3" stroke="#dedede" stroke-width="0.8"/><rect x="2" y="2" width="14" height="14" fill="#f0f0f0"/><path d="M1 15.5 Q1 17.6 3 17.6 H15 Q17 17.6 17 15.5" fill="none" stroke="#8a8a8a" stroke-width="0.7"/><rect x="2.2" y="16.7" width="13.6" height="1.2" rx="0.5" fill="#55697f"/><rect x="1.5" y="1.5" width="15" height="9.5" fill="#fbfbfb"/><text x="1.8" y="10" font-family="Liberation Sans" font-size="6.2" font-weight="700" fill="#7f8ca0">GZ</text><rect x="10.9" y="1.2" width="4.4" height="9" rx="1.6" fill="#4d6384"/><rect x="12.2" y="2.4" width="1.6" height="6" fill="#c9ccd2"/><rect x="2" y="12" width="14" height="1.3" fill="#c6c6c6"/><rect x="2" y="14.5" width="14" height="1.3" fill="#c6c6c6"/></svg>
<div class="t" style="left:635px;top:769.70px;font-size:13px;line-height:15.6px;color:#222;font-weight:400;-webkit-text-stroke:0.25px #222;">symvers-2.6.32-754.25.1.el6.x86_64.gz</div>
<div class="t" style="left:911.5px;top:769.70px;font-size:13px;line-height:15.6px;color:#222;font-weight:400;-webkit-text-stroke:0.25px #222;">211.28 ko</div>
<div class="t" style="left:989px;top:769.70px;font-size:13px;line-height:15.6px;color:#222;font-weight:400;-webkit-text-stroke:0.25px #222;letter-spacing:0.15px">root:root</div>
<div class="t" style="left:1059.3px;top:769.70px;font-size:13px;line-height:15.6px;color:#222;font-weight:400;-webkit-text-stroke:0.25px #222;">0644</div>
<div class="t" style="left:1108.5px;top:769.70px;font-size:13px;line-height:15.6px;color:#222;font-weight:400;-webkit-text-stroke:0.25px #222;letter-spacing:0.08px">2019/12/23 - 16:23:53</div>
<div class="r" style="left:557px;top:811px;width:686px;height:1px;background:#e8e8e8"></div>
<div class="r" style="left:561.3px;top:792.5px;width:14.4px;height:14.4px;box-sizing:border-box;border:2px solid #dcdcdc;border-radius:3px;background:#fff"></div>
<svg class="r" style="left:600px;top:791px" width="18" height="18" viewBox="0 0 18 18"><rect x="0.9" y="0.7" width="16.2" height="16.8" rx="2.2" fill="#f3f3f3" stroke="#dedede" stroke-width="0.8"/><rect x="2" y="2" width="14" height="14" fill="#f0f0f0"/><path d="M1 15.5 Q1 17.6 3 17.6 H15 Q17 17.6 17 15.5" fill="none" stroke="#8a8a8a" stroke-width="0.7"/><rect x="2.2" y="16.7" width="13.6" height="1.2" rx="0.5" fill="#55697f"/><rect x="1.5" y="1.5" width="15" height="9.5" fill="#fbfbfb"/><text x="1.8" y="10" font-family="Liberation Sans" font-size="6.2" font-weight="700" fill="#7f8ca0">GZ</text><rect x="10.9" y="1.2" width="4.4" height="9" rx="1.6" fill="#4d6384"/><rect x="12.2" y="2.4" width="1.6" height="6" fill="#c9ccd2"/><rect x="2" y="12" width="14" height="1.3" fill="#c6c6c6"/><rect x="2" y="14.5" width="14" height="1.3" fill="#c6c6c6"/></svg>
<div class="t" style="left:635px;top:792.70px;font-size:13px;line-height:15.6px;color:#222;font-weight:400;-webkit-text-stroke:0.25px #222;">symvers-2.6.32-754.28.1.el6.x86_64.gz</div>
<div class="t" style="left:911.5px;top:792.70px;font-size:13px;line-height:15.6px;color:#222;font-weight:400;-webkit-text-stroke:0.25px #222;">211.28 ko</div>
<div class="t" style="left:989px;top:792.70px;font-size:13px;line-height:15.6px;color:#222;font-weight:400;-webkit-text-stroke:0.25px #222;letter-spacing:0.15px">root:root</div>
<div class="t" style="left:1059.3px;top:792.70px;font-size:13px;line-height:15.6px;color:#222;font-weight:400;-webkit-text-stroke:0.25px #222;">0644</div>
<div class="t" style="left:1108.5px;top:792.70px;font-size:13px;line-height:15.6px;color:#222;font-weight:400;-webkit-text-stroke:0.25px #222;letter-spacing:0.08px">2020/03/11 - 19:42:53</div>
<div class="r" style="left:557px;top:812px;width:686px;height:22px;background:#f7f7f7"></div>
<div class="r" style="left:557px;top:834px;width:686px;height:1px;background:#e8e8e8"></div>
<div class="r" style="left:561.3px;top:815.5px;width:14.4px;height:14.4px;box-sizing:border-box;border:2px solid #dcdcdc;border-radius:3px;background:#fff"></div>
<svg class="r" style="left:600px;top:814px" width="18" height="18" viewBox="0 0 18 18"><rect x="0.9" y="0.7" width="16.2" height="16.8" rx="2.2" fill="#f3f3f3" stroke="#dedede" stroke-width="0.8"/><rect x="2" y="2" width="14" height="14" fill="#f0f0f0"/><path d="M1 15.5 Q1 17.6 3 17.6 H15 Q17 17.6 17 15.5" fill="none" stroke="#8a8a8a" stroke-width="0.7"/><rect x="2.2" y="16.7" width="13.6" height="1.2" rx="0.5" fill="#55697f"/><rect x="1.5" y="1.5" width="15" height="9.5" fill="#fbfbfb"/><text x="1.8" y="10" font-family="Liberation Sans" font-size="6.2" font-weight="700" fill="#7f8ca0">GZ</text><rect x="10.9" y="1.2" width="4.4" height="9" rx="1.6" fill="#4d6384"/><rect x="12.2" y="2.4" width="1.6" height="6" fill="#c9ccd2"/><rect x="2" y="12" width="14" height="1.3" fill="#c6c6c6"/><rect x="2" y="14.5" width="14" height="1.3" fill="#c6c6c6"/></svg>
<div class="t" style="left:635px;top:815.70px;font-size:13px;line-height:15.6px;color:#222;font-weight:400;-webkit-text-stroke:0.25px #222;">symvers-2.6.32-754.29.1.el6.x86_64.gz</div>
<div class="t" style="left:911.5px;top:815.70px;font-size:13px;line-height:15.6px;color:#222;font-weight:400;-webkit-text-stroke:0.25px #222;">211.28 ko</div>
<div class="t" style="left:989px;top:815.70px;font-size:13px;line-height:15.6px;color:#222;font-weight:400;-webkit-text-stroke:0.25px #222;letter-spacing:0.15px">root:root</div>
<div class="t" style="left:1059.3px;top:815.70px;font-size:13px;line-height:15.6px;color:#222;font-weight:400;-webkit-text-stroke:0.25px #222;">0644</div>
<div class="t" style="left:1108.5px;top:815.70px;font-size:13px;line-height:15.6px;color:#222;font-weight:400;-webkit-text-stroke:0.25px #222;letter-spacing:0.08px">2020/04/27 - 17:35:13</div>
<div class="r" style="left:557px;top:857px;width:686px;height:1px;background:#e8e8e8"></div>
<div class="r" style="left:561.3px;top:838.5px;width:14.4px;height:14.4px;box-sizing:border-box;border:2px solid #dcdcdc;border-radius:3px;background:#fff"></div>
<svg class="r" style="left:600px;top:837px" width="18" height="18" viewBox="0 0 18 18"><rect x="0.9" y="0.7" width="16.2" height="16.8" rx="2.2" fill="#f3f3f3" stroke="#dedede" stroke-width="0.8"/><rect x="2" y="2" width="14" height="14" fill="#f0f0f0"/><path d="M1 15.5 Q1 17.6 3 17.6 H15 Q17 17.6 17 15.5" fill="none" stroke="#8a8a8a" stroke-width="0.7"/><rect x="2.2" y="16.7" width="13.6" height="1.2" rx="0.5" fill="#55697f"/><rect x="1.5" y="1.5" width="15" height="9.5" fill="#fbfbfb"/><text x="1.8" y="10" font-family="Liberation Sans" font-size="6.2" font-weight="700" fill="#7f8ca0">GZ</text><rect x="10.9" y="1.2" width="4.4" height="9" rx="1.6" fill="#4d6384"/><rect x="12.2" y="2.4" width="1.6" height="6" fill="#c9ccd2"/><rect x="2" y="12" width="14" height="1.3" fill="#c6c6c6"/><rect x="2" y="14.5" width="14" height="1.3" fill="#c6c6c6"/></svg>
<div class="t" style="left:635px;top:838.70px;font-size:13px;line-height:15.6px;color:#222;font-weight:400;-webkit-text-stroke:0.25px #222;">symvers-2.6.32-754.29.2.el6.x86_64.gz</div>
<div class="t" style="left:911.5px;top:838.70px;font-size:13px;line-height:15.6px;color:#222;font-weight:400;-webkit-text-stroke:0.25px #222;">211.28 ko</div>
<div class="t" style="left:989px;top:838.70px;font-size:13px;line-height:15.6px;color:#222;font-weight:400;-webkit-text-stroke:0.25px #222;letter-spacing:0.15px">root:root</div>
<div class="t" style="left:1059.3px;top:838.70px;font-size:13px;line-height:15.6px;color:#222;font-weight:400;-webkit-text-stroke:0.25px #222;">0644</div>
<div class="t" style="left:1108.5px;top:838.70px;font-size:13px;line-height:15.6px;color:#222;font-weight:400;-webkit-text-stroke:0.25px #222;letter-spacing:0.08px">2020/05/12 - 19:43:26</div>
<div class="r" style="left:557px;top:858px;width:686px;height:22px;background:#f7f7f7"></div>
<div class="r" style="left:557px;top:880px;width:686px;height:1px;background:#e8e8e8"></div>
<div class="r" style="left:561.3px;top:861.5px;width:14.4px;height:14.4px;box-sizing:border-box;border:2px solid #dcdcdc;border-radius:3px;background:#fff"></div>
<svg class="r" style="left:600px;top:860px" width="18" height="18" viewBox="0 0 18 18"><rect x="0.9" y="0.7" width="16.2" height="16.8" rx="2.2" fill="#f3f3f3" stroke="#dedede" stroke-width="0.8"/><rect x="2" y="2" width="14" height="14" fill="#f0f0f0"/><path d="M1 15.5 Q1 17.6 3 17.6 H15 Q17 17.6 17 15.5" fill="none" stroke="#8a8a8a" stroke-width="0.7"/><rect x="2.2" y="16.7" width="13.6" height="1.2" rx="0.5" fill="#55697f"/><text x="9" y="7.3" font-family="Liberation Sans" font-size="6" font-weight="700" fill="#8f8f8f" text-anchor="middle" letter-spacing="0.2">ABC</text><rect x="3" y="8.8" width="12" height="0.9" fill="#8f8f8f"/><rect x="3" y="10.6" width="12" height="0.9" fill="#c4c4c4"/><rect x="3" y="12.2" width="11" height="0.9" fill="#c4c4c4"/><rect x="3" y="13.8" width="12" height="1.4" fill="#dcdcdc"/></svg>
<div class="t" style="left:635px;top:861.70px;font-size:13px;line-height:15.6px;color:#222;font-weight:400;-webkit-text-stroke:0.25px #222;">System.map-2.6.32-754.24.3.el6.x86_64</div>
<div class="t" style="left:911.5px;top:861.70px;font-size:13px;line-height:15.6px;color:#222;font-weight:400;-webkit-text-stroke:0.25px #222;">2.53 Mo</div>
<div class="t" style="left:989px;top:861.70px;font-size:13px;line-height:15.6px;color:#222;font-weight:400;-webkit-text-stroke:0.25px #222;letter-spacing:0.15px">root:root</div>
<div class="t" style="left:1059.3px;top:861.70px;font-size:13px;line-height:15.6px;color:#222;font-weight:400;-webkit-text-stroke:0.25px #222;">0644</div>
<div class="t" style="left:1108.5px;top:861.70px;font-size:13px;line-height:15.6px;color:#222;font-weight:400;-webkit-text-stroke:0.25px #222;letter-spacing:0.08px">2019/11/14 - 16:39:36</div>
<div class="r" style="left:557px;top:903px;width:686px;height:1px;background:#e8e8e8"></div>
<div class="r" style="left:561.3px;top:884.5px;width:14.4px;height:14.4px;box-sizing:border-box;border:2px solid #dcdcdc;border-radius:3px;background:#fff"></div>
<svg class="r" style="left:600px;top:883px" width="18" height="18" viewBox="0 0 18 18"><rect x="0.9" y="0.7" width="16.2" height="16.8" rx="2.2" fill="#f3f3f3" stroke="#dedede" stroke-width="0.8"/><rect x="2" y="2" width="14" height="14" fill="#f0f0f0"/><path d="M1 15.5 Q1 17.6 3 17.6 H15 Q17 17.6 17 15.5" fill="none" stroke="#8a8a8a" stroke-width="0.7"/><rect x="2.2" y="16.7" width="13.6" height="1.2" rx="0.5" fill="#55697f"/><text x="9" y="7.3" font-family="Liberation Sans" font-size="6" font-weight="700" fill="#8f8f8f" text-anchor="middle" letter-spacing="0.2">ABC</text><rect x="3" y="8.8" width="12" height="0.9" fill="#8f8f8f"/><rect x="3" y="10.6" width="12" height="0.9" fill="#c4c4c4"/><rect x="3" y="12.2" width="11" height="0.9" fill="#c4c4c4"/><rect x="3" y="13.8" width="12" height="1.4" fill="#dcdcdc"/></svg>
<div class="t" style="left:635px;top:884.70px;font-size:13px;line-height:15.6px;color:#222;font-weight:400;-webkit-text-stroke:0.25px #222;">System.map-2.6.32-754.25.1.el6.x86_64</div>
<div class="t" style="left:911.5px;top:884.70px;font-size:13px;line-height:15.6px;color:#222;font-weight:400;-webkit-text-stroke:0.25px #222;">2.53 Mo</div>
<div class="t" style="left:989px;top:884.70px;font-size:13px;line-height:15.6px;color:#222;font-weight:400;-webkit-text-stroke:0.25px #222;letter-spacing:0.15px">root:root</div>
<div class="t" style="left:1059.3px;top:884.70px;font-size:13px;line-height:15.6px;color:#222;font-weight:400;-webkit-text-stroke:0.25px #222;">0644</div>
<div class="t" style="left:1108.5px;top:884.70px;font-size:13px;line-height:15.6px;color:#222;font-weight:400;-webkit-text-stroke:0.25px #222;letter-spacing:0.08px">2019/12/23 - 16:23:43</div>
<div class="r" style="left:557px;top:904px;width:686px;height:22px;background:#f7f7f7"></div>
<div class="r" style="left:557px;top:926px;width:686px;height:1px;background:#e8e8e8"></div>
<div class="r" style="left:561.3px;top:907.5px;width:14.4px;height:14.4px;box-sizing:border-box;border:2px solid #dcdcdc;border-radius:3px;background:#fff"></div>
<svg class="r" style="left:600px;top:906px" width="18" height="18" viewBox="0 0 18 18"><rect x="0.9" y="0.7" width="16.2" height="16.8" rx="2.2" fill="#f3f3f3" stroke="#dedede" stroke-width="0.8"/><rect x="2" y="2" width="14" height="14" fill="#f0f0f0"/><path d="M1 15.5 Q1 17.6 3 17.6 H15 Q17 17.6 17 15.5" fill="none" stroke="#8a8a8a" stroke-width="0.7"/><rect x="2.2" y="16.7" width="13.6" height="1.2" rx="0.5" fill="#55697f"/><text x="9" y="7.3" font-family="Liberation Sans" font-size="6" font-weight="700" fill="#8f8f8f" text-anchor="middle" letter-spacing="0.2">ABC</text><rect x="3" y="8.8" width="12" height="0.9" fill="#8f8f8f"/><rect x="3" y="10.6" width="12" height="0.9" fill="#c4c4c4"/><rect x="3" y="12.2" width="11" height="0.9" fill="#c4c4c4"/><rect x="3" y="13.8" width="12" height="1.4" fill="#dcdcdc"/></svg>
<div class="t" style="left:635px;top:907.70px;font-size:13px;line-height:15.6px;color:#222;font-weight:400;-webkit-text-stroke:0.25px #222;">System.map-2.6.32-754.28.1.el6.x86_64</div>
<div class="t" style="left:911.5px;top:907.70px;font-size:13px;line-height:15.6px;color:#222;font-weight:400;-webkit-text-stroke:0.25px #222;">2.53 Mo</div>
<div class="t" style="left:989px;top:907.70px;font-size:13px;line-height:15.6px;color:#222;font-weight:400;-webkit-text-stroke:0.25px #222;letter-spacing:0.15px">root:root</div>
<div class="t" style="left:1059.3px;top:907.70px;font-size:13px;line-height:15.6px;color:#222;font-weight:400;-webkit-text-stroke:0.25px #222;">0644</div>
<div class="t" style="left:1108.5px;top:907.70px;font-size:13px;line-height:15.6px;color:#222;font-weight:400;-webkit-text-stroke:0.25px #222;letter-spacing:0.08px">2020/03/11 - 19:42:41</div>
<div class="r" style="left:557px;top:949px;width:686px;height:1px;background:#e8e8e8"></div>
<div class="r" style="left:561.3px;top:930.5px;width:14.4px;height:14.4px;box-sizing:border-box;border:2px solid #dcdcdc;border-radius:3px;background:#fff"></div>
<svg class="r" style="left:600px;top:929px" width="18" height="18" viewBox="0 0 18 18"><rect x="0.9" y="0.7" width="16.2" height="16.8" rx="2.2" fill="#f3f3f3" stroke="#dedede" stroke-width="0.8"/><rect x="2" y="2" width="14" height="14" fill="#f0f0f0"/><path d="M1 15.5 Q1 17.6 3 17.6 H15 Q17 17.6 17 15.5" fill="none" stroke="#8a8a8a" stroke-width="0.7"/><rect x="2.2" y="16.7" width="13.6" height="1.2" rx="0.5" fill="#55697f"/><text x="9" y="7.3" font-family="Liberation Sans" font-size="6" font-weight="700" fill="#8f8f8f" text-anchor="middle" letter-spacing="0.2">ABC</text><rect x="3" y="8.8" width="12" height="0.9" fill="#8f8f8f"/><rect x="3" y="10.6" width="12" height="0.9" fill="#c4c4c4"/><rect x="3" y="12.2" width="11" height="0.9" fill="#c4c4c4"/><rect x="3" y="13.8" width="12" height="1.4" fill="#dcdcdc"/></svg>
<div class="t" style="left:635px;top:930.70px;font-size:13px;line-height:15.6px;color:#222;font-weight:400;-webkit-text-stroke:0.25px #222;">System.map-2.6.32-754.29.1.el6.x86_64</div>
<div class="t" style="left:911.5px;top:930.70px;font-size:13px;line-height:15.6px;color:#222;font-weight:400;-webkit-text-stroke:0.25px #222;">2.53 Mo</div>
<div class="t" style="left:989px;top:930.70px;font-size:13px;line-height:15.6px;color:#222;font-weight:400;-webkit-text-stroke:0.25px #222;letter-spacing:0.15px">root:root</div>
<div class="t" style="left:1059.3px;top:930.70px;font-size:13px;line-height:15.6px;color:#222;font-weight:400;-webkit-text-stroke:0.25px #222;">0644</div>
<div class="t" style="left:1108.5px;top:930.70px;font-size:13px;line-height:15.6px;color:#222;font-weight:400;-webkit-text-stroke:0.25px #222;letter-spacing:0.08px">2020/04/27 - 17:34:58</div>
<div class="r" style="left:557px;top:950px;width:686px;height:22px;background:#f7f7f7"></div>
<div class="r" style="left:557px;top:972px;width:686px;height:1px;background:#e8e8e8"></div>
<div class="r" style="left:561.3px;top:953.5px;width:14.4px;height:14.4px;box-sizing:border-box;border:2px solid #dcdcdc;border-radius:3px;background:#fff"></div>
<svg class="r" style="left:600px;top:952px" width="18" height="18" viewBox="0 0 18 18"><rect x="0.9" y="0.7" width="16.2" height="16.8" rx="2.2" fill="#f3f3f3" stroke="#dedede" stroke-width="0.8"/><rect x="2" y="2" width="14" height="14" fill="#f0f0f0"/><path d="M1 15.5 Q1 17.6 3 17.6 H15 Q17 17.6 17 15.5" fill="none" stroke="#8a8a8a" stroke-width="0.7"/><rect x="2.2" y="16.7" width="13.6" height="1.2" rx="0.5" fill="#55697f"/><text x="9" y="7.3" font-family="Liberation Sans" font-size="6" font-weight="700" fill="#8f8f8f" text-anchor="middle" letter-spacing="0.2">ABC</text><rect x="3" y="8.8" width="12" height="0.9" fill="#8f8f8f"/><rect x="3" y="10.6" width="12" height="0.9" fill="#c4c4c4"/><rect x="3" y="12.2" width="11" height="0.9" fill="#c4c4c4"/><rect x="3" y="13.8" width="12" height="1.4" fill="#dcdcdc"/></svg>
<div class="t" style="left:635px;top:953.70px;font-size:13px;line-height:15.6px;color:#222;font-weight:400;-webkit-text-stroke:0.25px #222;">System.map-2.6.32-754.29.2.el6.x86_64</div>
<div class="t" style="left:911.5px;top:953.70px;font-size:13px;line-height:15.6px;color:#222;font-weight:400;-webkit-text-stroke:0.25px #222;">2.53 Mo</div>
<div class="t" style="left:989px;top:953.70px;font-size:13px;line-height:15.6px;color:#222;font-weight:400;-webkit-text-stroke:0.25px #222;letter-spacing:0.15px">root:root</div>
<div class="t" style="left:1059.3px;top:953.70px;font-size:13px;line-height:15.6px;color:#222;font-weight:400;-webkit-text-stroke:0.25px #222;">0644</div>
<div class="t" style="left:1108.5px;top:953.70px;font-size:13px;line-height:15.6px;color:#222;font-weight:400;-webkit-text-stroke:0.25px #222;letter-spacing:0.08px">2020/05/12 - 19:43:06</div>
<div class="r" style="left:557px;top:995px;width:686px;height:1px;background:#e8e8e8"></div>
<div class="r" style="left:561.3px;top:976.5px;width:14.4px;height:14.4px;box-sizing:border-box;border:2px solid #dcdcdc;border-radius:3px;background:#fff"></div>
<svg class="r" style="left:600px;top:975px" width="18" height="18" viewBox="0 0 18 18"><rect x="0.9" y="0.7" width="16.2" height="16.8" rx="2.2" fill="#f3f3f3" stroke="#dedede" stroke-width="0.8"/><rect x="2" y="2" width="14" height="14" fill="#f0f0f0"/><path d="M1 15.5 Q1 17.6 3 17.6 H15 Q17 17.6 17 15.5" fill="none" stroke="#8a8a8a" stroke-width="0.7"/><rect x="2.2" y="16.7" width="13.6" height="1.2" rx="0.5" fill="#55697f"/><text x="3.3" y="7.9" font-family="Liberation Mono" font-size="8.4" fill="#a2a2a2" letter-spacing="0.9">01</text><text x="3.3" y="15.6" font-family="Liberation Mono" font-size="8.4" fill="#a2a2a2" letter-spacing="0.9">10</text></svg>
<div class="t" style="left:635px;top:976.70px;font-size:13px;line-height:15.6px;color:#222;font-weight:400;-webkit-text-stroke:0.25px #222;">vmlinuz-2.6.32-754.24.3.el6.x86_64</div>
<div class="t" style="left:911.5px;top:976.70px;font-size:13px;line-height:15.6px;color:#222;font-weight:400;-webkit-text-stroke:0.25px #222;">4.13 Mo</div>
<div class="t" style="left:989px;top:976.70px;font-size:13px;line-height:15.6px;color:#222;font-weight:400;-webkit-text-stroke:0.25px #222;letter-spacing:0.15px">root:root</div>
<div class="t" style="left:1059.3px;top:976.70px;font-size:13px;line-height:15.6px;color:#222;font-weight:400;-webkit-text-stroke:0.25px #222;">0755</div>
<div class="t" style="left:1108.5px;top:976.70px;font-size:13px;line-height:15.6px;color:#222;font-weight:400;-webkit-text-stroke:0.25px #222;letter-spacing:0.08px">2019/11/14 - 16:39:36</div>
<div class="r" style="left:557px;top:996px;width:686px;height:22px;background:#f7f7f7"></div>
<div class="r" style="left:557px;top:1018px;width:686px;height:1px;background:#e8e8e8"></div>
<div class="r" style="left:561.3px;top:999.5px;width:14.4px;height:14.4px;box-sizing:border-box;border:2px solid #dcdcdc;border-radius:3px;background:#fff"></div>
<svg class="r" style="left:600px;top:998px" width="18" height="18" viewBox="0 0 18 18"><rect x="0.9" y="0.7" width="16.2" height="16.8" rx="2.2" fill="#f3f3f3" stroke="#dedede" stroke-width="0.8"/><rect x="2" y="2" width="14" height="14" fill="#f0f0f0"/><path d="M1 15.5 Q1 17.6 3 17.6 H15 Q17 17.6 17 15.5" fill="none" stroke="#8a8a8a" stroke-width="0.7"/><rect x="2.2" y="16.7" width="13.6" height="1.2" rx="0.5" fill="#55697f"/><text x="3.3" y="7.9" font-family="Liberation Mono" font-size="8.4" fill="#a2a2a2" letter-spacing="0.9">01</text><text x="3.3" y="15.6" font-family="Liberation Mono" font-size="8.4" fill="#a2a2a2" letter-spacing="0.9">10</text></svg>
<div class="t" style="left:635px;top:999.70px;font-size:13px;line-height:15.6px;color:#222;font-weight:400;-webkit-text-stroke:0.25px #222;">vmlinuz-2.6.32-754.25.1.el6.x86_64</div>
<div class="t" style="left:911.5px;top:999.70px;font-size:13px;line-height:15.6px;color:#222;font-weight:400;-webkit-text-stroke:0.25px #222;">4.13 Mo</div>
<div class="t" style="left:989px;top:999.70px;font-size:13px;line-height:15.6px;color:#222;font-weight:400;-webkit-text-stroke:0.25px #222;letter-spacing:0.15px">root:root</div>
<div class="t" style="left:1059.3px;top:999.70px;font-size:13px;line-height:15.6px;color:#222;font-weight:400;-webkit-text-stroke:0.25px #222;">0755</div>
<div class="t" style="left:1108.5px;top:999.70px;font-size:13px;line-height:15.6px;color:#222;font-weight:400;-webkit-text-stroke:0.25px #222;letter-spacing:0.08px">2019/12/23 - 16:23:43</div>
<div class="r" style="left:557px;top:1041px;width:686px;height:1px;background:#e8e8e8"></div>
<div class="r" style="left:561.3px;top:1022.5px;width:14.4px;height:14.4px;box-sizing:border-box;border:2px solid #dcdcdc;border-radius:3px;background:#fff"></div>
<svg class="r" style="left:600px;top:1021px" width="18" height="18" viewBox="0 0 18 18"><rect x="0.9" y="0.7" width="16.2" height="16.8" rx="2.2" fill="#f3f3f3" stroke="#dedede" stroke-width="0.8"/><rect x="2" y="2" width="14" height="14" fill="#f0f0f0"/><path d="M1 15.5 Q1 17.6 3 17.6 H15 Q17 17.6 17 15.5" fill="none" stroke="#8a8a8a" stroke-width="0.7"/><rect x="2.2" y="16.7" width="13.6" height="1.2" rx="0.5" fill="#55697f"/><text x="3.3" y="7.9" font-family="Liberation Mono" font-size="8.4" fill="#a2a2a2" letter-spacing="0.9">01</text><text x="3.3" y="15.6" font-family="Liberation Mono" font-size="8.4" fill="#a2a2a2" letter-spacing="0.9">10</text></svg>
<div class="t" style="left:635px;top:1022.70px;font-size:13px;line-height:15.6px;color:#222;font-weight:400;-webkit-text-stroke:0.25px #222;">vmlinuz-2.6.32-754.28.1.el6.x86_64</div>
<div class="t" style="left:911.5px;top:1022.70px;font-size:13px;line-height:15.6px;color:#222;font-weight:400;-webkit-text-stroke:0.25px #222;">4.13 Mo</div>
<div class="t" style="left:989px;top:1022.70px;font-size:13px;line-height:15.6px;color:#222;font-weight:400;-webkit-text-stroke:0.25px #222;letter-spacing:0.15px">root:root</div>
<div class="t" style="left:1059.3px;top:1022.70px;font-size:13px;line-height:15.6px;color:#222;font-weight:400;-webkit-text-stroke:0.25px #222;">0755</div>
<div class="t" style="left:1108.5px;top:1022.70px;font-size:13px;line-height:15.6px;color:#222;font-weight:400;-webkit-text-stroke:0.25px #222;letter-spacing:0.08px">2020/03/11 - 19:42:41</div>
<div class="r" style="left:557px;top:1042px;width:686px;height:22px;background:#f7f7f7"></div>
<div class="r" style="left:557px;top:1064px;width:686px;height:1px;background:#e8e8e8"></div>
<div class="r" style="left:561.3px;top:1045.5px;width:14.4px;height:14.4px;box-sizing:border-box;border:2px solid #dcdcdc;border-radius:3px;background:#fff"></div>
<svg class="r" style="left:600px;top:1044px" width="18" height="18" viewBox="0 0 18 18"><rect x="0.9" y="0.7" width="16.2" height="16.8" rx="2.2" fill="#f3f3f3" stroke="#dedede" stroke-width="0.8"/><rect x="2" y="2" width="14" height="14" fill="#f0f0f0"/><path d="M1 15.5 Q1 17.6 3 17.6 H15 Q17 17.6 17 15.5" fill="none" stroke="#8a8a8a" stroke-width="0.7"/><rect x="2.2" y="16.7" width="13.6" height="1.2" rx="0.5" fill="#55697f"/><text x="3.3" y="7.9" font-family="Liberation Mono" font-size="8.4" fill="#a2a2a2" letter-spacing="0.9">01</text><text x="3.3" y="15.6" font-family="Liberation Mono" font-size="8.4" fill="#a2a2a2" letter-spacing="0.9">10</text></svg>
<div class="t" style="left:635px;top:1045.70px;font-size:13px;line-height:15.6px;color:#222;font-weight:400;-webkit-text-stroke:0.25px #222;">vmlinuz-2.6.32-754.29.1.el6.x86_64</div>
<div class="t" style="left:911.5px;top:1045.70px;font-size:13px;line-height:15.6px;color:#222;font-weight:400;-webkit-text-stroke:0.25px #222;">4.13 Mo</div>
<div class="t" style="left:989px;top:1045.70px;font-size:13px;line-height:15.6px;color:#222;font-weight:400;-webkit-text-stroke:0.25px #222;letter-spacing:0.15px">root:root</div>
<div class="t" style="left:1059.3px;top:1045.70px;font-size:13px;line-height:15.6px;color:#222;font-weight:400;-webkit-text-stroke:0.25px #222;">0755</div>
<div class="t" style="left:1108.5px;top:1045.70px;font-size:13px;line-height:15.6px;color:#222;font-weight:400;-webkit-text-stroke:0.25px #222;letter-spacing:0.08px">2020/04/27 - 17:34:58</div>
<div class="r" style="left:557px;top:1087px;width:686px;height:1px;background:#e8e8e8"></div>
<div class="r" style="left:561.3px;top:1068.5px;width:14.4px;height:14.4px;box-sizing:border-box;border:2px solid #dcdcdc;border-radius:3px;background:#fff"></div>
<svg class="r" style="left:600px;top:1067px" width="18" height="18" viewBox="0 0 18 18"><rect x="0.9" y="0.7" width="16.2" height="16.8" rx="2.2" fill="#f3f3f3" stroke="#dedede" stroke-width="0.8"/><rect x="2" y="2" width="14" height="14" fill="#f0f0f0"/><path d="M1 15.5 Q1 17.6 3 17.6 H15 Q17 17.6 17 15.5" fill="none" stroke="#8a8a8a" stroke-width="0.7"/><rect x="2.2" y="16.7" width="13.6" height="1.2" rx="0.5" fill="#55697f"/><text x="3.3" y="7.9" font-family="Liberation Mono" font-size="8.4" fill="#a2a2a2" letter-spacing="0.9">01</text><text x="3.3" y="15.6" font-family="Liberation Mono" font-size="8.4" fill="#a2a2a2" letter-spacing="0.9">10</text></svg>
<div class="t" style="left:635px;top:1068.70px;font-size:13px;line-height:15.6px;color:#222;font-weight:400;-webkit-text-stroke:0.25px #222;">vmlinuz-2.6.32-754.29.2.el6.x86_64</div>
<div class="t" style="left:911.5px;top:1068.70px;font-size:13px;line-height:15.6px;color:#222;font-weight:400;-webkit-text-stroke:0.25px #222;">4.13 Mo</div>
<div class="t" style="left:989px;top:1068.70px;font-size:13px;line-height:15.6px;color:#222;font-weight:400;-webkit-text-stroke:0.25px #222;letter-spacing:0.15px">root:root</div>
<div class="t" style="left:1059.3px;top:1068.70px;font-size:13px;line-height:15.6px;color:#222;font-weight:400;-webkit-text-stroke:0.25px #222;">0755</div>
<div class="t" style="left:1108.5px;top:1068.70px;font-size:13px;line-height:15.6px;color:#222;font-weight:400;-webkit-text-stroke:0.25px #222;letter-spacing:0.08px">2020/05/12 - 19:43:06</div>
<div class="r" style="left:0px;top:973px;width:553px;height:2px;background:#23283a"></div>
<div class="r" style="left:412px;top:973px;width:48px;height:2px;background:#4e6884"></div>
<div class="r" style="left:1248px;top:973px;width:29px;height:2px;background:#2a2e44"></div>
<div class="r" style="left:1268px;top:0px;width:8px;height:973px;background:#efefef"></div>
<div class="r" style="left:1269px;top:28px;width:6px;height:945px;background:#cacaca"></div>
<div class="r" style="left:1276px;top:0px;width:1px;height:975px;background:#4a3450"></div>
<div class="r" style="left:1241px;top:54px;width:35px;height:31.5px;background:#3e6bab"></div>
<svg class="r" style="left:1249px;top:59px" width="21" height="22" viewBox="0 0 21 22"><path d="M9.6 0.9 C7.2 0.9 6.3 3 6.1 5.6 C5.8 9.6 4.8 13.2 1.2 17.4 H18.8 C15.2 13.2 14.2 9.6 13.9 5.6 C13.7 3 12.8 0.9 10.4 0.9z M7.6 17.4 Q10 21.5 12.4 17.4z" fill="#fff"/></svg>
<div class="r" style="left:1261.2px;top:58.1px;width:12.6px;height:12.6px;border-radius:50%;background:#dc5b4f"></div>
<svg class="r" style="left:1264.5px;top:61px" width="5" height="8" viewBox="0 0 5 8"><path d="M0.6 1.9 L3.1 0.5 H3.9 V7.2 H2.5 V2.4 L0.6 3.3z" fill="#fff"/></svg>
</body></html>
